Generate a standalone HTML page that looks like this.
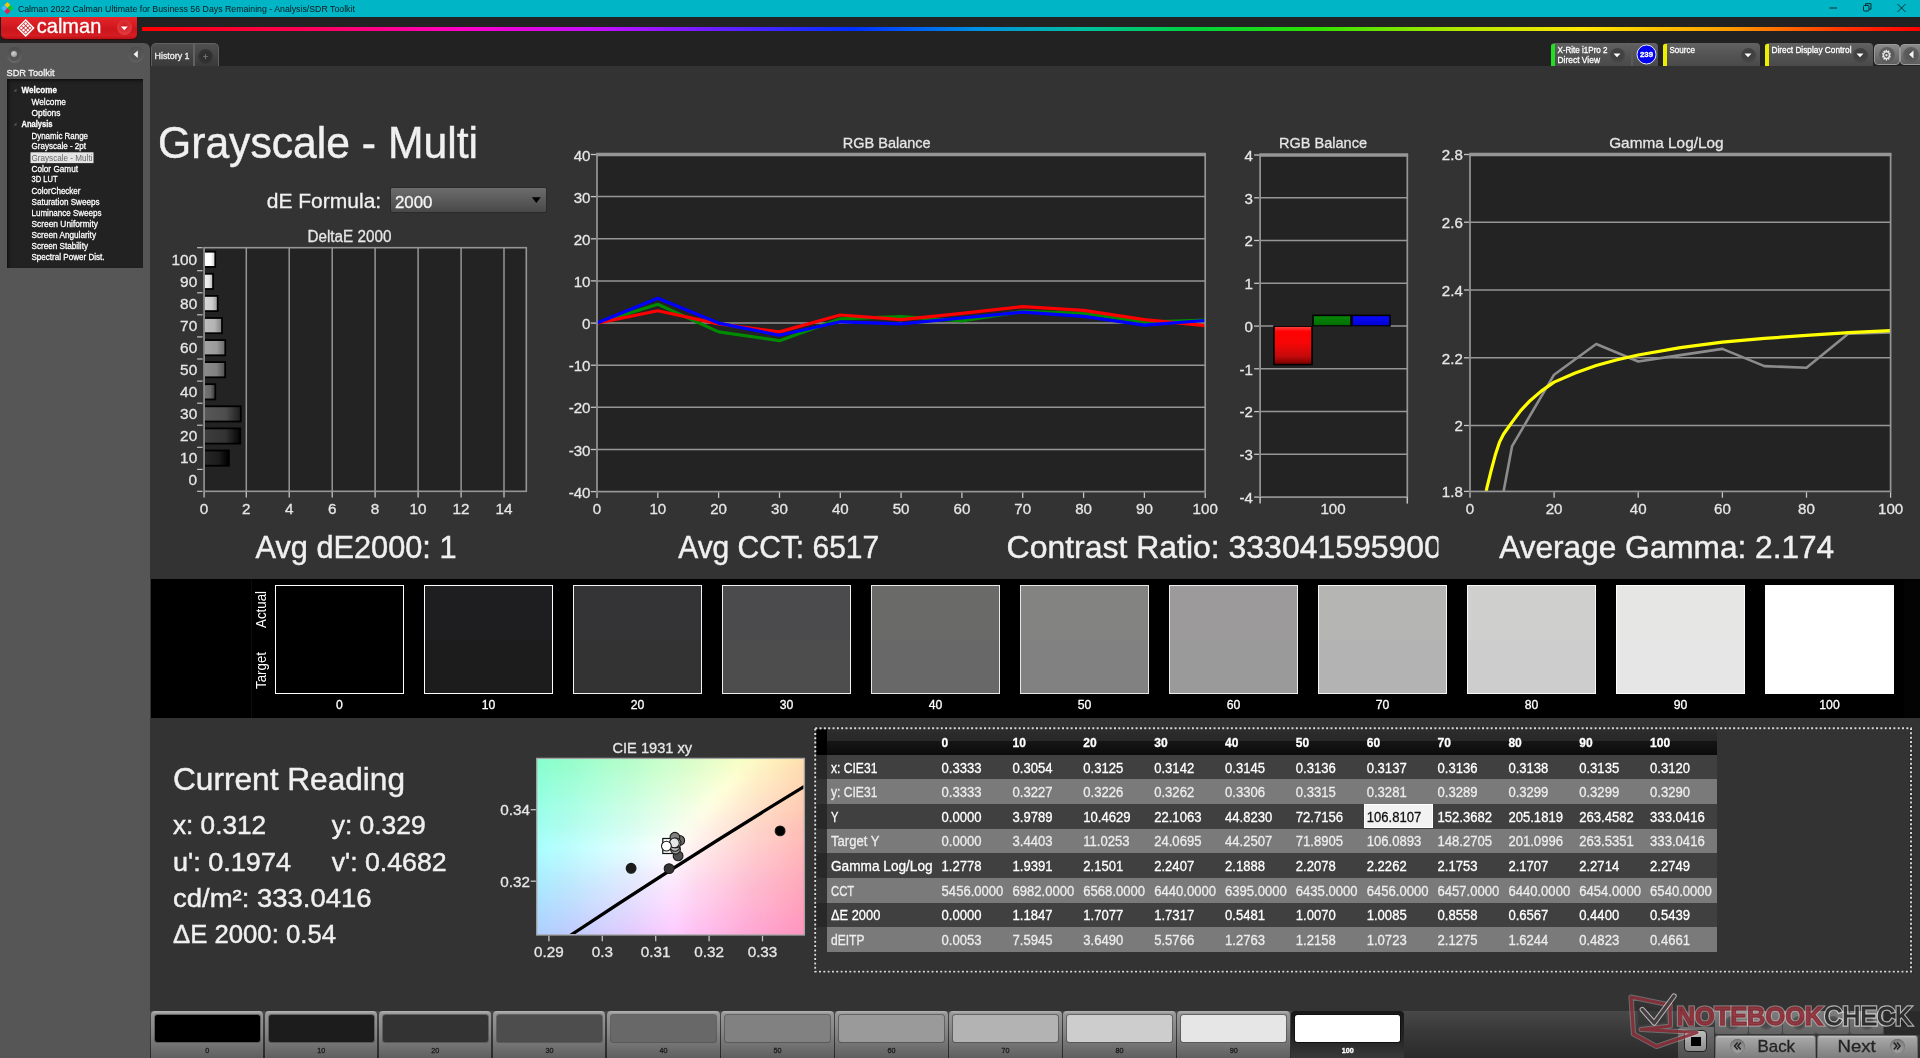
<!DOCTYPE html>
<html lang="en"><head><meta charset="utf-8"><title>Calman 2022 - Analysis/SDR Toolkit</title>
<style>
html,body{margin:0;padding:0;}
body{width:1920px;height:1058px;overflow:hidden;background:#333333;position:relative;font-family:"Liberation Sans",sans-serif;}
div{position:absolute;box-sizing:border-box;}
svg{position:absolute;left:0;top:0;font-family:"Liberation Sans",sans-serif;will-change:transform;}

</style></head><body>
<div style="left:0;top:0;width:1920px;height:17px;background:#00b5c5;"></div>
<div style="left:0;top:17px;width:1920px;height:50px;background:#222222;"></div>
<div style="left:1px;top:17px;width:136px;height:22px;border-radius:0 0 5px 5px;background:linear-gradient(#e6262b,#cc161c 55%,#d41c22 85%,#b81016);box-shadow:0 1px 1px #400608;"></div>
<div style="left:117px;top:20px;width:15px;height:15px;border-radius:8px;background:radial-gradient(circle at 50% 40%,#d01a20,#e84a4e);"></div>
<div style="left:142px;top:26.700px;width:1778px;height:3.900px;background:linear-gradient(90deg,#ff0000 0%,#ff0060 10%,#ff00c8 18%,#c010ff 26%,#6020ff 33%,#0030ff 40%,#0090e0 47%,#00c0a0 53%,#00d040 59%,#30e000 66%,#b0e800 74%,#ffe800 81%,#ffa000 89%,#ff3000 96%,#ff0000 100%);"></div>
<div style="left:0;top:43px;width:150px;height:1015px;background:#565656;border-radius:0 6px 0 0;"></div>
<div style="left:6.500px;top:47px;width:15.500px;height:15.500px;border-radius:8px;background:linear-gradient(#484848,#6a6a6a);"></div>
<div style="left:8.500px;top:49px;width:11.500px;height:11.500px;border-radius:6px;background:radial-gradient(circle at 50% 40%,#4e4e4e,#585858);"></div>
<div style="left:11px;top:50.500px;width:6px;height:6px;border-radius:3px;background:radial-gradient(circle at 40% 35%,#d0d0d0,#8a8a8a);"></div>
<div style="left:128px;top:46.500px;width:15.500px;height:15.500px;border-radius:8px;background:linear-gradient(#4a4a4a,#666);"></div>
<div style="left:129.500px;top:48px;width:12.500px;height:12.500px;border-radius:7px;background:radial-gradient(circle at 50% 40%,#505050,#5a5a5a);"></div>
<div style="left:7px;top:79px;width:136px;height:188.500px;background:#222222;box-shadow:inset 2px 2px 3px #111;"></div>
<div style="left:150.500px;top:43px;width:68.500px;height:23.500px;border-radius:5px 5px 0 0;background:linear-gradient(#505050,#383838);border:1px solid #606060;border-bottom:none;"></div>
<div style="left:193px;top:44px;width:1.500px;height:22px;background:#626262;"></div>
<div style="left:198px;top:49px;width:14.500px;height:14.500px;border-radius:8px;background:radial-gradient(circle,#2e2e2e 40%,#3e3e3e 100%);"></div>
<div style="left:150px;top:66px;width:1770px;height:992px;background:#333333;"></div>
<div style="left:1551px;top:43.200px;width:107px;height:23px;border-radius:4px 4px 0 0;background:linear-gradient(#626262,#555 45%,#4a4a4a);"></div>
<div style="left:1551px;top:44.200px;width:3.800px;height:22px;border-radius:2px 0 0 0;background:#22dd22;"></div>
<div style="left:1609.5px;top:48px;width:15px;height:15px;border-radius:8px;background:radial-gradient(circle at 50% 40%,#3a3a3a,#4c4c4c);"></div>
<div style="left:1631px;top:45px;width:1.500px;height:21px;background:#5a5a5a;"></div>
<div style="left:1663px;top:43.200px;width:97px;height:23px;border-radius:4px 4px 0 0;background:linear-gradient(#626262,#555 45%,#4a4a4a);"></div>
<div style="left:1663px;top:44.200px;width:3.800px;height:22px;border-radius:2px 0 0 0;background:#eeee00;"></div>
<div style="left:1740.5px;top:48px;width:15px;height:15px;border-radius:8px;background:radial-gradient(circle at 50% 40%,#3a3a3a,#4c4c4c);"></div>
<div style="left:1765px;top:43.200px;width:108px;height:23px;border-radius:4px 4px 0 0;background:linear-gradient(#626262,#555 45%,#4a4a4a);"></div>
<div style="left:1765px;top:44.200px;width:3.800px;height:22px;border-radius:2px 0 0 0;background:#eeee00;"></div>
<div style="left:1852.5px;top:48px;width:15px;height:15px;border-radius:8px;background:radial-gradient(circle at 50% 40%,#3a3a3a,#4c4c4c);"></div>
<div style="left:1874px;top:43.500px;width:25.500px;height:21.500px;border-radius:4px;background:linear-gradient(#8a8a8a,#5e5e5e);border:1px solid #9a9a9a;"></div>
<div style="left:1900px;top:43.500px;width:24px;height:21.500px;border-radius:4px;background:linear-gradient(#8a8a8a,#5e5e5e);border:1px solid #9a9a9a;"></div>
<div style="left:1878.500px;top:46.500px;width:16px;height:16px;border-radius:8px;background:radial-gradient(circle,#505050,#666);"></div>
<div style="left:1903px;top:46.500px;width:16px;height:16px;border-radius:8px;background:radial-gradient(circle,#505050,#666);"></div>
<div style="left:389.500px;top:186.500px;width:157.300px;height:26.700px;background:linear-gradient(#6c6c6c,#484848);border:1px solid #2a2a2a;border-radius:2px;"></div>
<div style="left:150.500px;top:578.800px;width:1769.500px;height:139px;background:#000;"></div>
<div style="left:251px;top:578.800px;width:1px;height:139px;background:#0c0c0c;"></div>
<div style="left:1904px;top:578.800px;width:16px;height:139px;background:#030303;"></div>
<div style="left:275.3px;top:585.300px;width:128.400px;height:109px;border:1.600px solid #ffffff;background:linear-gradient(#000000 0,#000000 50%,#000000 50%,#000000 100%);"></div>
<div style="left:424.3px;top:585.300px;width:128.400px;height:109px;border:1.600px solid #ffffff;background:linear-gradient(#1e1e20 0,#1e1e20 50%,#1c1c1c 50%,#1c1c1c 100%);"></div>
<div style="left:573.3px;top:585.300px;width:128.400px;height:109px;border:1.600px solid #f4f4f4;background:linear-gradient(#343335 0,#343335 50%,#333333 50%,#333333 100%);"></div>
<div style="left:722.3px;top:585.300px;width:128.400px;height:109px;border:1.600px solid #f0f0f0;background:linear-gradient(#4b4a4c 0,#4b4a4c 50%,#4d4d4d 50%,#4d4d4d 100%);"></div>
<div style="left:871.3px;top:585.300px;width:128.400px;height:109px;border:1.600px solid #e8e8e8;background:linear-gradient(#6a6a69 0,#6a6a69 50%,#686868 50%,#686868 100%);"></div>
<div style="left:1020.3px;top:585.300px;width:128.400px;height:109px;border:1.600px solid #e8e8e8;background:linear-gradient(#838381 0,#838381 50%,#818181 50%,#818181 100%);"></div>
<div style="left:1169.3px;top:585.300px;width:128.400px;height:109px;border:1.600px solid #eeeeee;background:linear-gradient(#9c9a9a 0,#9c9a9a 50%,#9a9a9a 50%,#9a9a9a 100%);"></div>
<div style="left:1318.3px;top:585.300px;width:128.400px;height:109px;border:1.600px solid #f4f4f4;background:linear-gradient(#b5b5b4 0,#b5b5b4 50%,#b3b3b3 50%,#b3b3b3 100%);"></div>
<div style="left:1467.3px;top:585.300px;width:128.400px;height:109px;border:1.600px solid #f8f8f8;background:linear-gradient(#cfcfcd 0,#cfcfcd 50%,#cdcdcd 50%,#cdcdcd 100%);"></div>
<div style="left:1616.3px;top:585.300px;width:128.400px;height:109px;border:1.600px solid #ffffff;background:linear-gradient(#e6e6e4 0,#e6e6e4 50%,#e6e6e6 50%,#e6e6e6 100%);"></div>
<div style="left:1765.3px;top:585.300px;width:128.400px;height:109px;border:1.600px solid #ffffff;background:linear-gradient(#ffffff 0,#ffffff 50%,#ffffff 50%,#ffffff 100%);"></div>
<div style="left:816.2px;top:729.3px;width:901.1px;height:25.5px;background:linear-gradient(#2d2d2d 0,#282828 46%,#151515 48%,#0b0b0b 100%);"></div>
<div style="left:816.2px;top:729.3px;width:10.800px;height:25.5px;background:#000;"></div>
<div style="left:827.0px;top:754.8px;width:890.3px;height:24.9px;background:#404040;"></div>
<div style="left:816.2px;top:754.8px;width:10.800px;height:24.9px;background:#282828;"></div>
<div style="left:827.0px;top:779.4px;width:890.3px;height:24.9px;background:#7a7a7a;"></div>
<div style="left:816.2px;top:779.4px;width:10.800px;height:24.9px;background:#333333;"></div>
<div style="left:827.0px;top:804.1px;width:890.3px;height:24.9px;background:#404040;"></div>
<div style="left:816.2px;top:804.1px;width:10.800px;height:24.9px;background:#282828;"></div>
<div style="left:1363.500px;top:804.3px;width:69px;height:23.4px;background:#f2f2f2;border:1px solid #fff;"></div>
<div style="left:827.0px;top:828.7px;width:890.3px;height:24.9px;background:#7a7a7a;"></div>
<div style="left:816.2px;top:828.7px;width:10.800px;height:24.9px;background:#333333;"></div>
<div style="left:827.0px;top:853.3px;width:890.3px;height:24.9px;background:#404040;"></div>
<div style="left:816.2px;top:853.3px;width:10.800px;height:24.9px;background:#282828;"></div>
<div style="left:827.0px;top:878.0px;width:890.3px;height:24.9px;background:#7a7a7a;"></div>
<div style="left:816.2px;top:878.0px;width:10.800px;height:24.9px;background:#333333;"></div>
<div style="left:827.0px;top:902.6px;width:890.3px;height:24.9px;background:#404040;"></div>
<div style="left:816.2px;top:902.6px;width:10.800px;height:24.9px;background:#282828;"></div>
<div style="left:827.0px;top:927.3px;width:890.3px;height:24.9px;background:#7a7a7a;"></div>
<div style="left:816.2px;top:927.3px;width:10.800px;height:24.9px;background:#333333;"></div>
<div style="left:150px;top:1011px;width:1770px;height:47px;background:linear-gradient(#484848 0,#3a3a3a 40%,#2a2a2a 100%);"></div>
<div style="left:150.8px;top:1011.300px;width:112.600px;height:48px;border-radius:4px 4px 0 0;background:linear-gradient(#b4b4b4 0,#969696 6%,#828282 50%,#5e5e5e 100%);"></div>
<div style="left:154.7px;top:1014.700px;width:105px;height:27.500px;border-radius:2.500px;background:#000000;box-shadow:0 0 0 1px rgba(70,70,70,0.600);"></div>
<div style="left:264.9px;top:1011.300px;width:112.600px;height:48px;border-radius:4px 4px 0 0;background:linear-gradient(#b4b4b4 0,#969696 6%,#828282 50%,#5e5e5e 100%);"></div>
<div style="left:268.8px;top:1014.700px;width:105px;height:27.500px;border-radius:2.500px;background:#1c1c1c;box-shadow:0 0 0 1px rgba(70,70,70,0.600);"></div>
<div style="left:378.9px;top:1011.300px;width:112.600px;height:48px;border-radius:4px 4px 0 0;background:linear-gradient(#b4b4b4 0,#969696 6%,#828282 50%,#5e5e5e 100%);"></div>
<div style="left:382.8px;top:1014.700px;width:105px;height:27.500px;border-radius:2.500px;background:#333333;box-shadow:0 0 0 1px rgba(70,70,70,0.600);"></div>
<div style="left:492.9px;top:1011.300px;width:112.600px;height:48px;border-radius:4px 4px 0 0;background:linear-gradient(#b4b4b4 0,#969696 6%,#828282 50%,#5e5e5e 100%);"></div>
<div style="left:496.8px;top:1014.700px;width:105px;height:27.500px;border-radius:2.500px;background:#4d4d4d;box-shadow:0 0 0 1px rgba(70,70,70,0.600);"></div>
<div style="left:607.0px;top:1011.300px;width:112.600px;height:48px;border-radius:4px 4px 0 0;background:linear-gradient(#b4b4b4 0,#969696 6%,#828282 50%,#5e5e5e 100%);"></div>
<div style="left:610.9px;top:1014.700px;width:105px;height:27.500px;border-radius:2.500px;background:#686868;box-shadow:0 0 0 1px rgba(70,70,70,0.600);"></div>
<div style="left:721.0px;top:1011.300px;width:112.600px;height:48px;border-radius:4px 4px 0 0;background:linear-gradient(#b4b4b4 0,#969696 6%,#828282 50%,#5e5e5e 100%);"></div>
<div style="left:724.9px;top:1014.700px;width:105px;height:27.500px;border-radius:2.500px;background:#818181;box-shadow:0 0 0 1px rgba(70,70,70,0.600);"></div>
<div style="left:835.1px;top:1011.300px;width:112.600px;height:48px;border-radius:4px 4px 0 0;background:linear-gradient(#b4b4b4 0,#969696 6%,#828282 50%,#5e5e5e 100%);"></div>
<div style="left:839.0px;top:1014.700px;width:105px;height:27.500px;border-radius:2.500px;background:#9a9a9a;box-shadow:0 0 0 1px rgba(70,70,70,0.600);"></div>
<div style="left:949.2px;top:1011.300px;width:112.600px;height:48px;border-radius:4px 4px 0 0;background:linear-gradient(#b4b4b4 0,#969696 6%,#828282 50%,#5e5e5e 100%);"></div>
<div style="left:953.1px;top:1014.700px;width:105px;height:27.500px;border-radius:2.500px;background:#b3b3b3;box-shadow:0 0 0 1px rgba(70,70,70,0.600);"></div>
<div style="left:1063.2px;top:1011.300px;width:112.600px;height:48px;border-radius:4px 4px 0 0;background:linear-gradient(#b4b4b4 0,#969696 6%,#828282 50%,#5e5e5e 100%);"></div>
<div style="left:1067.1px;top:1014.700px;width:105px;height:27.500px;border-radius:2.500px;background:#cdcdcd;box-shadow:0 0 0 1px rgba(70,70,70,0.600);"></div>
<div style="left:1177.2px;top:1011.300px;width:112.600px;height:48px;border-radius:4px 4px 0 0;background:linear-gradient(#b4b4b4 0,#969696 6%,#828282 50%,#5e5e5e 100%);"></div>
<div style="left:1181.2px;top:1014.700px;width:105px;height:27.500px;border-radius:2.500px;background:#e6e6e6;box-shadow:0 0 0 1px rgba(70,70,70,0.600);"></div>
<div style="left:1291.3px;top:1011.300px;width:112.500px;height:48px;border-radius:4px 4px 0 0;background:linear-gradient(#181818 0,#222 50%,#3a3a3a 100%);"></div>
<div style="left:1295.2px;top:1014.700px;width:105px;height:27.500px;border-radius:2.500px;background:#ffffff;box-shadow:0 0 0 1px #111;"></div>
<div style="left:1715px;top:1011px;width:169px;height:23px;background:#4a4a4a;"></div>
<div style="left:1715.3px;top:1011px;width:33px;height:22.800px;background:linear-gradient(#7e7e7e,#626262);border-radius:0 0 3px 3px;"></div>
<div style="left:1724.8px;top:1015.500px;width:14px;height:14px;border-radius:7px;background:radial-gradient(circle,#484848 30%,#686868 100%);"></div>
<div style="left:1749.0px;top:1011px;width:33px;height:22.800px;background:linear-gradient(#7e7e7e,#626262);border-radius:0 0 3px 3px;"></div>
<div style="left:1758.5px;top:1015.500px;width:14px;height:14px;border-radius:7px;background:radial-gradient(circle,#484848 30%,#686868 100%);"></div>
<div style="left:1782.7px;top:1011px;width:33px;height:22.800px;background:linear-gradient(#7e7e7e,#626262);border-radius:0 0 3px 3px;"></div>
<div style="left:1792.2px;top:1015.500px;width:14px;height:14px;border-radius:7px;background:radial-gradient(circle,#484848 30%,#686868 100%);"></div>
<div style="left:1816.4px;top:1011px;width:33px;height:22.800px;background:linear-gradient(#7e7e7e,#626262);border-radius:0 0 3px 3px;"></div>
<div style="left:1825.9px;top:1015.500px;width:14px;height:14px;border-radius:7px;background:radial-gradient(circle,#484848 30%,#686868 100%);"></div>
<div style="left:1850.1px;top:1011px;width:33px;height:22.800px;background:linear-gradient(#7e7e7e,#626262);border-radius:0 0 3px 3px;"></div>
<div style="left:1859.6px;top:1015.500px;width:14px;height:14px;border-radius:7px;background:radial-gradient(circle,#484848 30%,#686868 100%);"></div>
<div style="left:1884px;top:1011px;width:36px;height:23.500px;background:#2a2a2a;"></div>
<div style="left:1896px;top:1016px;width:14px;height:14px;border-radius:7px;background:radial-gradient(circle,#222,#343434);"></div>
<div style="left:1678px;top:1026.700px;width:35.500px;height:32px;border-radius:4px 0 0 0;background:linear-gradient(#707070,#4e4e4e);"></div>
<div style="left:1684.200px;top:1030.400px;width:22.500px;height:21.800px;border-radius:4px;background:linear-gradient(#bcbcbc,#8c8c8c);border:1.800px solid #222;"></div>
<div style="left:1690.800px;top:1036.700px;width:10px;height:9.200px;background:#000;"></div>
<div style="left:1714.8px;top:1035px;width:101.300px;height:23.500px;border-radius:3px 3px 0 0;background:linear-gradient(#c4c4c4 0,#a6a6a6 10%,#909090 55%,#7c7c7c 100%);border:1px solid #6a6a6a;border-bottom:none;"></div>
<div style="left:1817.0px;top:1035px;width:101.300px;height:23.500px;border-radius:3px 3px 0 0;background:linear-gradient(#c4c4c4 0,#a6a6a6 10%,#909090 55%,#7c7c7c 100%);border:1px solid #6a6a6a;border-bottom:none;"></div>
<div style="left:1730px;top:1038.500px;width:15px;height:15px;border-radius:8px;background:linear-gradient(#7c7c7c,#a4a4a4);box-shadow:inset 0 0 2px #555;"></div>
<div style="left:1889.500px;top:1038.500px;width:15px;height:15px;border-radius:8px;background:linear-gradient(#7c7c7c,#a4a4a4);box-shadow:inset 0 0 2px #555;"></div>
<svg width="1920" height="1058" viewBox="0 0 1920 1058">
<defs><linearGradient id="gb0" x1="0" y1="0" x2="1" y2="0"><stop offset="0" stop-color="rgb(255,255,255)"/><stop offset="0.600" stop-color="rgb(255,255,255)"/><stop offset="1" stop-color="rgb(210,210,210)"/></linearGradient><linearGradient id="gb1" x1="0" y1="0" x2="1" y2="0"><stop offset="0" stop-color="rgb(240,240,240)"/><stop offset="0.600" stop-color="rgb(230,230,230)"/><stop offset="1" stop-color="rgb(185,185,185)"/></linearGradient><linearGradient id="gb2" x1="0" y1="0" x2="1" y2="0"><stop offset="0" stop-color="rgb(215,215,215)"/><stop offset="0.600" stop-color="rgb(205,205,205)"/><stop offset="1" stop-color="rgb(160,160,160)"/></linearGradient><linearGradient id="gb3" x1="0" y1="0" x2="1" y2="0"><stop offset="0" stop-color="rgb(189,189,189)"/><stop offset="0.600" stop-color="rgb(179,179,179)"/><stop offset="1" stop-color="rgb(134,134,134)"/></linearGradient><linearGradient id="gb4" x1="0" y1="0" x2="1" y2="0"><stop offset="0" stop-color="rgb(164,164,164)"/><stop offset="0.600" stop-color="rgb(154,154,154)"/><stop offset="1" stop-color="rgb(109,109,109)"/></linearGradient><linearGradient id="gb5" x1="0" y1="0" x2="1" y2="0"><stop offset="0" stop-color="rgb(139,139,139)"/><stop offset="0.600" stop-color="rgb(129,129,129)"/><stop offset="1" stop-color="rgb(84,84,84)"/></linearGradient><linearGradient id="gb6" x1="0" y1="0" x2="1" y2="0"><stop offset="0" stop-color="rgb(114,114,114)"/><stop offset="0.600" stop-color="rgb(104,104,104)"/><stop offset="1" stop-color="rgb(59,59,59)"/></linearGradient><linearGradient id="gb7" x1="0" y1="0" x2="1" y2="0"><stop offset="0" stop-color="rgb(87,87,87)"/><stop offset="0.600" stop-color="rgb(77,77,77)"/><stop offset="1" stop-color="rgb(32,32,32)"/></linearGradient><linearGradient id="gb8" x1="0" y1="0" x2="1" y2="0"><stop offset="0" stop-color="rgb(61,61,61)"/><stop offset="0.600" stop-color="rgb(51,51,51)"/><stop offset="1" stop-color="rgb(6,6,6)"/></linearGradient><linearGradient id="gb9" x1="0" y1="0" x2="1" y2="0"><stop offset="0" stop-color="rgb(38,38,38)"/><stop offset="0.600" stop-color="rgb(28,28,28)"/><stop offset="1" stop-color="rgb(0,0,0)"/></linearGradient><clipPath id="cprgb"><rect x="597.0" y="154.5" width="609.7" height="337.1"/></clipPath><linearGradient id="gr" x1="0" y1="0" x2="0" y2="1"><stop offset="0" stop-color="#ff4a4a"/><stop offset="0.140" stop-color="#ff0202"/><stop offset="0.450" stop-color="#f60606"/><stop offset="0.780" stop-color="#c40a0a"/><stop offset="1" stop-color="#740000"/></linearGradient><linearGradient id="gg" x1="0" y1="0" x2="0" y2="1"><stop offset="0" stop-color="#088808"/><stop offset="1" stop-color="#006c00"/></linearGradient><linearGradient id="gbl" x1="0" y1="0" x2="0" y2="1"><stop offset="0" stop-color="#0a0aff"/><stop offset="1" stop-color="#0000d0"/></linearGradient><clipPath id="cpcr"><rect x="990" y="525" width="448.500" height="50"/></clipPath><clipPath id="cpg"><rect x="1470.0" y="154.5" width="422.1" height="336.9"/></clipPath><clipPath id="cpbg"><rect x="536.7" y="758.4" width="267.7" height="176.6"/></clipPath><filter id="fbl" x="-5%" y="-5%" width="110%" height="110%"><feGaussianBlur stdDeviation="5"/></filter><clipPath id="cpc"><rect x="537.7" y="759.4" width="265.7" height="174.6"/></clipPath></defs>
<g transform="translate(7.400,8.100)"><path d="M0 -6.100l3.050 3.050l-3.050 3.050l-3.050 -3.050z" fill="#f4c414"/><path d="M-3.050 -3.050l3.050 3.050l-3.050 3.050l-3.050 -3.050z" fill="#48b8f8"/><path d="M3.050 -3.050l3.050 3.050l-3.050 3.050l-3.050 -3.050z" fill="#10c828"/><path d="M0 0l3.050 3.050l-3.050 3.050l-3.050 -3.050z" fill="#e82058"/></g>
<text x="17.9" y="11.9" font-size="9.74" fill="#0a1a1c" text-anchor="start" textLength="337.0" lengthAdjust="spacingAndGlyphs" stroke="none">Calman 2022 Calman Ultimate for Business 56 Days Remaining  - Analysis/SDR Toolkit</text>
<line x1="1829.5" y1="8.0" x2="1837.0" y2="8.0" stroke="#10282b" stroke-width="1"/>
<rect x="1863.500" y="5.500" width="5.500" height="5.500" rx="1" fill="none" stroke="#10282b" stroke-width="1"/><path d="M1865.500 5.500v-1.800h5.500v5.500h-1.800" fill="none" stroke="#10282b" stroke-width="1"/>
<path d="M1897.500 4l8 8m0 -8l-8 8" stroke="#10282b" stroke-width="1" fill="none"/>
<path d="M120.800 26.500h7l-3.500 3.800z" fill="#fff"/>
<g transform="translate(25.700,27.900) rotate(45)"><rect x="-5.600" y="-5.600" width="11.200" height="11.200" fill="none" stroke="#fff" stroke-width="1.500"/><g fill="#fff"><rect x="-4.20" y="-4.20" width="2.300" height="2.300"/><rect x="-4.20" y="-1.15" width="2.300" height="2.300"/><rect x="-4.20" y="1.90" width="2.300" height="2.300"/><rect x="-1.15" y="-4.20" width="2.300" height="2.300"/><rect x="-1.15" y="-1.15" width="2.300" height="2.300"/><rect x="-1.15" y="1.90" width="2.300" height="2.300"/><rect x="1.90" y="-4.20" width="2.300" height="2.300"/><rect x="1.90" y="-1.15" width="2.300" height="2.300"/><rect x="1.90" y="1.90" width="2.300" height="2.300"/></g></g>
<text x="36.8" y="33.1" font-size="19.48" fill="#ffffff" text-anchor="start" textLength="64.5" lengthAdjust="spacingAndGlyphs" stroke="#ffffff" stroke-width="0.3">calman</text>
<path d="M137.800 50.500v7.500l-4.300 -3.750z" fill="#f4f4f4"/>
<text x="6.5" y="75.5" font-size="9.74" fill="#f2f2f2" text-anchor="start" textLength="48.0" lengthAdjust="spacingAndGlyphs" stroke="#f2f2f2" stroke-width="0.3">SDR Toolkit</text>
<rect x="30.5" y="152.3" width="63.0" height="10.8" fill="#e4e4e4"/>
<text x="21.5" y="93.0" font-size="9.59" fill="#ffffff" text-anchor="start" textLength="35.5" lengthAdjust="spacingAndGlyphs" font-weight="bold" stroke="#ffffff" stroke-width="0.3">Welcome</text>
<text x="31.5" y="105.0" font-size="9.59" fill="#ffffff" text-anchor="start" textLength="34.5" lengthAdjust="spacingAndGlyphs" stroke="#ffffff" stroke-width="0.3">Welcome</text>
<text x="31.5" y="116.0" font-size="9.59" fill="#ffffff" text-anchor="start" textLength="29.0" lengthAdjust="spacingAndGlyphs" stroke="#ffffff" stroke-width="0.3">Options</text>
<text x="21.5" y="127.0" font-size="9.59" fill="#ffffff" text-anchor="start" textLength="31.0" lengthAdjust="spacingAndGlyphs" font-weight="bold" stroke="#ffffff" stroke-width="0.3">Analysis</text>
<text x="31.5" y="138.5" font-size="9.59" fill="#ffffff" text-anchor="start" textLength="56.5" lengthAdjust="spacingAndGlyphs" stroke="#ffffff" stroke-width="0.3">Dynamic Range</text>
<text x="31.5" y="149.3" font-size="9.59" fill="#ffffff" text-anchor="start" textLength="54.5" lengthAdjust="spacingAndGlyphs" stroke="#ffffff" stroke-width="0.3">Grayscale - 2pt</text>
<text x="31.5" y="160.5" font-size="9.59" fill="#666666" text-anchor="start" textLength="61.0" lengthAdjust="spacingAndGlyphs" stroke="none">Grayscale - Multi</text>
<text x="31.5" y="171.7" font-size="9.59" fill="#ffffff" text-anchor="start" textLength="46.5" lengthAdjust="spacingAndGlyphs" stroke="#ffffff" stroke-width="0.3">Color Gamut</text>
<text x="31.5" y="182.3" font-size="9.59" fill="#ffffff" text-anchor="start" textLength="26.0" lengthAdjust="spacingAndGlyphs" stroke="#ffffff" stroke-width="0.3">3D LUT</text>
<text x="31.5" y="193.5" font-size="9.59" fill="#ffffff" text-anchor="start" textLength="49.0" lengthAdjust="spacingAndGlyphs" stroke="#ffffff" stroke-width="0.3">ColorChecker</text>
<text x="31.5" y="204.7" font-size="9.59" fill="#ffffff" text-anchor="start" textLength="68.0" lengthAdjust="spacingAndGlyphs" stroke="#ffffff" stroke-width="0.3">Saturation Sweeps</text>
<text x="31.5" y="215.5" font-size="9.59" fill="#ffffff" text-anchor="start" textLength="70.0" lengthAdjust="spacingAndGlyphs" stroke="#ffffff" stroke-width="0.3">Luminance Sweeps</text>
<text x="31.5" y="226.7" font-size="9.59" fill="#ffffff" text-anchor="start" textLength="66.5" lengthAdjust="spacingAndGlyphs" stroke="#ffffff" stroke-width="0.3">Screen Uniformity</text>
<text x="31.5" y="238.0" font-size="9.59" fill="#ffffff" text-anchor="start" textLength="64.5" lengthAdjust="spacingAndGlyphs" stroke="#ffffff" stroke-width="0.3">Screen Angularity</text>
<text x="31.5" y="248.5" font-size="9.59" fill="#ffffff" text-anchor="start" textLength="56.5" lengthAdjust="spacingAndGlyphs" stroke="#ffffff" stroke-width="0.3">Screen Stability</text>
<text x="31.5" y="259.8" font-size="9.59" fill="#ffffff" text-anchor="start" textLength="73.0" lengthAdjust="spacingAndGlyphs" stroke="#ffffff" stroke-width="0.3">Spectral Power Dist.</text>
<path d="M16.500 88.500v3h-3z M16.500 122.500v3h-3z" fill="#5a5a5a"/>
<text x="205.3" y="59.6" font-size="8.14" fill="#808080" text-anchor="middle" textLength="4.8" lengthAdjust="spacingAndGlyphs" stroke="#808080" stroke-width="0.3">+</text>
<text x="154.5" y="58.8" font-size="9.16" fill="#f0f0f0" text-anchor="start" textLength="35.0" lengthAdjust="spacingAndGlyphs" stroke="#f0f0f0" stroke-width="0.3">History 1</text>
<path d="M1613.5 53.5h7l-3.500 3.800z" fill="#fff"/>
<text x="1557.5" y="52.5" font-size="9.30" fill="#ffffff" text-anchor="start" textLength="50.0" lengthAdjust="spacingAndGlyphs" stroke="#ffffff" stroke-width="0.3">X-Rite i1Pro 2</text>
<text x="1557.5" y="63.0" font-size="9.30" fill="#ffffff" text-anchor="start" textLength="42.5" lengthAdjust="spacingAndGlyphs" stroke="#ffffff" stroke-width="0.3">Direct View</text>
<circle cx="1646.500" cy="54.500" r="9.500" fill="#0000f4" stroke="#e8e8ff" stroke-width="1"/>
<text x="1646.5" y="57.3" font-size="7.56" fill="#ffffff" text-anchor="middle" textLength="13.0" lengthAdjust="spacingAndGlyphs" font-weight="bold" stroke="#ffffff" stroke-width="0.3">239</text>
<path d="M1744.5 53.5h7l-3.500 3.800z" fill="#fff"/>
<text x="1669.5" y="52.5" font-size="9.30" fill="#ffffff" text-anchor="start" textLength="25.5" lengthAdjust="spacingAndGlyphs" stroke="#ffffff" stroke-width="0.3">Source</text>
<path d="M1856.5 53.5h7l-3.500 3.800z" fill="#fff"/>
<text x="1771.5" y="52.5" font-size="9.30" fill="#ffffff" text-anchor="start" textLength="80.0" lengthAdjust="spacingAndGlyphs" stroke="#ffffff" stroke-width="0.3">Direct Display Control</text>
<text x="1886.5" y="59.5" font-size="13.81" fill="#e8e8e8" text-anchor="middle" textLength="10.4" lengthAdjust="spacingAndGlyphs" font-family="DejaVu Sans, sans-serif" stroke="#e8e8e8" stroke-width="0.3">⚙</text>
<path d="M1913.500 50.500v8l-4.500 -4z" fill="#f4f4f4"/>
<text x="158.0" y="157.5" font-size="45.06" fill="#f0f0f0" text-anchor="start" textLength="320.0" lengthAdjust="spacingAndGlyphs" stroke="#f0f0f0" stroke-width="0.44999999999999996">Grayscale - Multi</text>
<text x="266.7" y="207.8" font-size="20.35" fill="#f0f0f0" text-anchor="start" textLength="114.5" lengthAdjust="spacingAndGlyphs" stroke="#f0f0f0" stroke-width="0.3">dE Formula:</text>
<text x="395.0" y="208.3" font-size="16.72" fill="#f4f4f4" text-anchor="start" textLength="37.5" lengthAdjust="spacingAndGlyphs" stroke="#f4f4f4" stroke-width="0.3">2000</text>
<path d="M531.800 197.200h9l-4.500 5.800z" fill="#000"/>
<text x="349.4" y="242.3" font-size="15.84" fill="#e6e6e6" text-anchor="middle" textLength="84.0" lengthAdjust="spacingAndGlyphs" stroke="#e6e6e6" stroke-width="0.3">DeltaE 2000</text>
<rect x="204.1" y="247.7" width="322.2" height="243.6" fill="#232323"/>
<line x1="246.3" y1="247.7" x2="246.3" y2="491.3" stroke="#969696" stroke-width="1.5"/>
<line x1="289.2" y1="247.7" x2="289.2" y2="491.3" stroke="#969696" stroke-width="1.5"/>
<line x1="332.2" y1="247.7" x2="332.2" y2="491.3" stroke="#969696" stroke-width="1.5"/>
<line x1="375.1" y1="247.7" x2="375.1" y2="491.3" stroke="#969696" stroke-width="1.5"/>
<line x1="418.1" y1="247.7" x2="418.1" y2="491.3" stroke="#969696" stroke-width="1.5"/>
<line x1="461.1" y1="247.7" x2="461.1" y2="491.3" stroke="#969696" stroke-width="1.5"/>
<line x1="504.0" y1="247.7" x2="504.0" y2="491.3" stroke="#969696" stroke-width="1.5"/>
<text x="197.2" y="264.5" font-size="15.41" fill="#e6e6e6" text-anchor="end" textLength="25.7" lengthAdjust="spacingAndGlyphs" stroke="#e6e6e6" stroke-width="0.3">100</text>
<line x1="197.1" y1="247.7" x2="202.6" y2="247.7" stroke="#c4c4c4" stroke-width="1.2"/>
<rect x="204.1" y="250.8" width="12.0" height="17" fill="#000"/>
<rect x="204.9" y="252.6" width="9.5" height="13.400" fill="url(#gb0)"/>
<text x="197.2" y="286.6" font-size="15.41" fill="#e6e6e6" text-anchor="end" textLength="17.1" lengthAdjust="spacingAndGlyphs" stroke="#e6e6e6" stroke-width="0.3">90</text>
<line x1="197.1" y1="270.7" x2="202.6" y2="270.7" stroke="#c4c4c4" stroke-width="1.2"/>
<rect x="204.1" y="272.9" width="9.8" height="17" fill="#000"/>
<rect x="204.9" y="274.7" width="7.3" height="13.400" fill="url(#gb1)"/>
<text x="197.2" y="308.7" font-size="15.41" fill="#e6e6e6" text-anchor="end" textLength="17.1" lengthAdjust="spacingAndGlyphs" stroke="#e6e6e6" stroke-width="0.3">80</text>
<line x1="197.1" y1="292.8" x2="202.6" y2="292.8" stroke="#c4c4c4" stroke-width="1.2"/>
<rect x="204.1" y="295.0" width="14.4" height="17" fill="#000"/>
<rect x="204.9" y="296.8" width="11.9" height="13.400" fill="url(#gb2)"/>
<text x="197.2" y="330.8" font-size="15.41" fill="#e6e6e6" text-anchor="end" textLength="17.1" lengthAdjust="spacingAndGlyphs" stroke="#e6e6e6" stroke-width="0.3">70</text>
<line x1="197.1" y1="314.8" x2="202.6" y2="314.8" stroke="#c4c4c4" stroke-width="1.2"/>
<rect x="204.1" y="317.1" width="18.7" height="17" fill="#000"/>
<rect x="204.9" y="318.9" width="16.2" height="13.400" fill="url(#gb3)"/>
<text x="197.2" y="352.9" font-size="15.41" fill="#e6e6e6" text-anchor="end" textLength="17.1" lengthAdjust="spacingAndGlyphs" stroke="#e6e6e6" stroke-width="0.3">60</text>
<line x1="197.1" y1="336.9" x2="202.6" y2="336.9" stroke="#c4c4c4" stroke-width="1.2"/>
<rect x="204.1" y="339.2" width="22.0" height="17" fill="#000"/>
<rect x="204.9" y="341.0" width="19.5" height="13.400" fill="url(#gb4)"/>
<text x="197.2" y="374.9" font-size="15.41" fill="#e6e6e6" text-anchor="end" textLength="17.1" lengthAdjust="spacingAndGlyphs" stroke="#e6e6e6" stroke-width="0.3">50</text>
<line x1="197.1" y1="359.0" x2="202.6" y2="359.0" stroke="#c4c4c4" stroke-width="1.2"/>
<rect x="204.1" y="361.2" width="21.9" height="17" fill="#000"/>
<rect x="204.9" y="363.0" width="19.4" height="13.400" fill="url(#gb5)"/>
<text x="197.2" y="397.0" font-size="15.41" fill="#e6e6e6" text-anchor="end" textLength="17.1" lengthAdjust="spacingAndGlyphs" stroke="#e6e6e6" stroke-width="0.3">40</text>
<line x1="197.1" y1="381.1" x2="202.6" y2="381.1" stroke="#c4c4c4" stroke-width="1.2"/>
<rect x="204.1" y="383.3" width="12.1" height="17" fill="#000"/>
<rect x="204.9" y="385.1" width="9.6" height="13.400" fill="url(#gb6)"/>
<text x="197.2" y="419.1" font-size="15.41" fill="#e6e6e6" text-anchor="end" textLength="17.1" lengthAdjust="spacingAndGlyphs" stroke="#e6e6e6" stroke-width="0.3">30</text>
<line x1="197.1" y1="403.2" x2="202.6" y2="403.2" stroke="#c4c4c4" stroke-width="1.2"/>
<rect x="204.1" y="405.4" width="37.5" height="17" fill="#000"/>
<rect x="204.9" y="407.2" width="35.0" height="13.400" fill="url(#gb7)"/>
<text x="197.2" y="441.2" font-size="15.41" fill="#e6e6e6" text-anchor="end" textLength="17.1" lengthAdjust="spacingAndGlyphs" stroke="#e6e6e6" stroke-width="0.3">20</text>
<line x1="197.1" y1="425.2" x2="202.6" y2="425.2" stroke="#c4c4c4" stroke-width="1.2"/>
<rect x="204.1" y="427.5" width="37.0" height="17" fill="#000"/>
<rect x="204.9" y="429.3" width="34.5" height="13.400" fill="url(#gb8)"/>
<text x="197.2" y="463.3" font-size="15.41" fill="#e6e6e6" text-anchor="end" textLength="17.1" lengthAdjust="spacingAndGlyphs" stroke="#e6e6e6" stroke-width="0.3">10</text>
<line x1="197.1" y1="447.3" x2="202.6" y2="447.3" stroke="#c4c4c4" stroke-width="1.2"/>
<rect x="204.1" y="449.6" width="25.7" height="17" fill="#000"/>
<rect x="204.9" y="451.4" width="23.2" height="13.400" fill="url(#gb9)"/>
<text x="197.2" y="485.3" font-size="15.41" fill="#e6e6e6" text-anchor="end" textLength="8.6" lengthAdjust="spacingAndGlyphs" stroke="#e6e6e6" stroke-width="0.3">0</text>
<line x1="197.1" y1="469.4" x2="202.6" y2="469.4" stroke="#c4c4c4" stroke-width="1.2"/>
<line x1="197.1" y1="491.3" x2="202.6" y2="491.3" stroke="#c4c4c4" stroke-width="1.2"/>
<rect x="204.1" y="247.7" width="322.2" height="243.6" fill="none" stroke="#969696" stroke-width="1.600"/>
<line x1="204.1" y1="492.1" x2="204.1" y2="497.6" stroke="#c4c4c4" stroke-width="1.3"/>
<text x="204.1" y="513.7" font-size="15.26" fill="#e6e6e6" text-anchor="middle" textLength="8.5" lengthAdjust="spacingAndGlyphs" stroke="#e6e6e6" stroke-width="0.3">0</text>
<line x1="246.3" y1="492.1" x2="246.3" y2="497.6" stroke="#c4c4c4" stroke-width="1.3"/>
<text x="246.3" y="513.7" font-size="15.26" fill="#e6e6e6" text-anchor="middle" textLength="8.5" lengthAdjust="spacingAndGlyphs" stroke="#e6e6e6" stroke-width="0.3">2</text>
<line x1="289.2" y1="492.1" x2="289.2" y2="497.6" stroke="#c4c4c4" stroke-width="1.3"/>
<text x="289.2" y="513.7" font-size="15.26" fill="#e6e6e6" text-anchor="middle" textLength="8.5" lengthAdjust="spacingAndGlyphs" stroke="#e6e6e6" stroke-width="0.3">4</text>
<line x1="332.2" y1="492.1" x2="332.2" y2="497.6" stroke="#c4c4c4" stroke-width="1.3"/>
<text x="332.2" y="513.7" font-size="15.26" fill="#e6e6e6" text-anchor="middle" textLength="8.5" lengthAdjust="spacingAndGlyphs" stroke="#e6e6e6" stroke-width="0.3">6</text>
<line x1="375.1" y1="492.1" x2="375.1" y2="497.6" stroke="#c4c4c4" stroke-width="1.3"/>
<text x="375.1" y="513.7" font-size="15.26" fill="#e6e6e6" text-anchor="middle" textLength="8.5" lengthAdjust="spacingAndGlyphs" stroke="#e6e6e6" stroke-width="0.3">8</text>
<line x1="418.1" y1="492.1" x2="418.1" y2="497.6" stroke="#c4c4c4" stroke-width="1.3"/>
<text x="418.1" y="513.7" font-size="15.26" fill="#e6e6e6" text-anchor="middle" textLength="17.0" lengthAdjust="spacingAndGlyphs" stroke="#e6e6e6" stroke-width="0.3">10</text>
<line x1="461.1" y1="492.1" x2="461.1" y2="497.6" stroke="#c4c4c4" stroke-width="1.3"/>
<text x="461.1" y="513.7" font-size="15.26" fill="#e6e6e6" text-anchor="middle" textLength="17.0" lengthAdjust="spacingAndGlyphs" stroke="#e6e6e6" stroke-width="0.3">12</text>
<line x1="504.0" y1="492.1" x2="504.0" y2="497.6" stroke="#c4c4c4" stroke-width="1.3"/>
<text x="504.0" y="513.7" font-size="15.26" fill="#e6e6e6" text-anchor="middle" textLength="17.0" lengthAdjust="spacingAndGlyphs" stroke="#e6e6e6" stroke-width="0.3">14</text>
<text x="255.5" y="557.6" font-size="30.52" fill="#f0f0f0" text-anchor="start" textLength="201.0" lengthAdjust="spacingAndGlyphs" stroke="#f0f0f0" stroke-width="0.44999999999999996">Avg dE2000: 1</text>
<text x="886.7" y="148.3" font-size="15.41" fill="#e6e6e6" text-anchor="middle" textLength="88.0" lengthAdjust="spacingAndGlyphs" stroke="#e6e6e6" stroke-width="0.3">RGB Balance</text>
<rect x="597.0" y="154.5" width="608.2" height="337.1" fill="#232323"/>
<line x1="590.7" y1="154.5" x2="596.2" y2="154.5" stroke="#c4c4c4" stroke-width="1.3"/>
<text x="590.5" y="160.5" font-size="15.12" fill="#e6e6e6" text-anchor="end" textLength="16.8" lengthAdjust="spacingAndGlyphs" stroke="#e6e6e6" stroke-width="0.3">40</text>
<line x1="597.0" y1="196.6" x2="1205.2" y2="196.6" stroke="#969696" stroke-width="1.5"/>
<line x1="590.7" y1="196.6" x2="596.2" y2="196.6" stroke="#c4c4c4" stroke-width="1.3"/>
<text x="590.5" y="202.6" font-size="15.12" fill="#e6e6e6" text-anchor="end" textLength="16.8" lengthAdjust="spacingAndGlyphs" stroke="#e6e6e6" stroke-width="0.3">30</text>
<line x1="597.0" y1="238.8" x2="1205.2" y2="238.8" stroke="#969696" stroke-width="1.5"/>
<line x1="590.7" y1="238.8" x2="596.2" y2="238.8" stroke="#c4c4c4" stroke-width="1.3"/>
<text x="590.5" y="244.8" font-size="15.12" fill="#e6e6e6" text-anchor="end" textLength="16.8" lengthAdjust="spacingAndGlyphs" stroke="#e6e6e6" stroke-width="0.3">20</text>
<line x1="597.0" y1="280.9" x2="1205.2" y2="280.9" stroke="#969696" stroke-width="1.5"/>
<line x1="590.7" y1="280.9" x2="596.2" y2="280.9" stroke="#c4c4c4" stroke-width="1.3"/>
<text x="590.5" y="286.9" font-size="15.12" fill="#e6e6e6" text-anchor="end" textLength="16.8" lengthAdjust="spacingAndGlyphs" stroke="#e6e6e6" stroke-width="0.3">10</text>
<line x1="597.0" y1="323.1" x2="1205.2" y2="323.1" stroke="#969696" stroke-width="1.5"/>
<line x1="590.7" y1="323.1" x2="596.2" y2="323.1" stroke="#c4c4c4" stroke-width="1.3"/>
<text x="590.5" y="329.1" font-size="15.12" fill="#e6e6e6" text-anchor="end" textLength="8.4" lengthAdjust="spacingAndGlyphs" stroke="#e6e6e6" stroke-width="0.3">0</text>
<line x1="597.0" y1="365.2" x2="1205.2" y2="365.2" stroke="#969696" stroke-width="1.5"/>
<line x1="590.7" y1="365.2" x2="596.2" y2="365.2" stroke="#c4c4c4" stroke-width="1.3"/>
<text x="590.5" y="371.2" font-size="15.12" fill="#e6e6e6" text-anchor="end" textLength="21.8" lengthAdjust="spacingAndGlyphs" stroke="#e6e6e6" stroke-width="0.3">-10</text>
<line x1="597.0" y1="407.3" x2="1205.2" y2="407.3" stroke="#969696" stroke-width="1.5"/>
<line x1="590.7" y1="407.3" x2="596.2" y2="407.3" stroke="#c4c4c4" stroke-width="1.3"/>
<text x="590.5" y="413.3" font-size="15.12" fill="#e6e6e6" text-anchor="end" textLength="21.8" lengthAdjust="spacingAndGlyphs" stroke="#e6e6e6" stroke-width="0.3">-20</text>
<line x1="597.0" y1="449.5" x2="1205.2" y2="449.5" stroke="#969696" stroke-width="1.5"/>
<line x1="590.7" y1="449.5" x2="596.2" y2="449.5" stroke="#c4c4c4" stroke-width="1.3"/>
<text x="590.5" y="455.5" font-size="15.12" fill="#e6e6e6" text-anchor="end" textLength="21.8" lengthAdjust="spacingAndGlyphs" stroke="#e6e6e6" stroke-width="0.3">-30</text>
<line x1="590.7" y1="491.6" x2="596.2" y2="491.6" stroke="#c4c4c4" stroke-width="1.3"/>
<text x="590.5" y="497.6" font-size="15.12" fill="#e6e6e6" text-anchor="end" textLength="21.8" lengthAdjust="spacingAndGlyphs" stroke="#e6e6e6" stroke-width="0.3">-40</text>
<polyline points="597.0,323.1 657.8,304.3 718.6,331.9 779.5,340.7 840.3,318.8 901.1,316.7 961.9,320.9 1022.7,311.3 1083.6,313.4 1144.4,322.2 1205.2,320.1" fill="none" stroke="#008a00" stroke-width="3.2" stroke-linejoin="round" clip-path="url(#cprgb)"/>
<polyline points="597.0,323.1 657.8,310.8 718.6,323.9 779.5,331.9 840.3,315.0 901.1,319.7 961.9,313.4 1022.7,306.6 1083.6,310.4 1144.4,319.7 1205.2,325.6" fill="none" stroke="#ff0000" stroke-width="3.2" stroke-linejoin="round" clip-path="url(#cprgb)"/>
<polyline points="597.0,323.1 657.8,298.2 718.6,323.1 779.5,335.3 840.3,321.8 901.1,323.9 961.9,318.0 1022.7,312.1 1083.6,316.3 1144.4,325.2 1205.2,320.5" fill="none" stroke="#0000ff" stroke-width="3.2" stroke-linejoin="round" clip-path="url(#cprgb)"/>
<rect x="597.0" y="154.5" width="608.2" height="337.1" fill="none" stroke="#969696" stroke-width="1.700"/>
<line x1="596.2" y1="154.5" x2="1206.0" y2="154.5" stroke="#969696" stroke-width="3.3"/>
<line x1="597.0" y1="492.4" x2="597.0" y2="497.9" stroke="#c4c4c4" stroke-width="1.3"/>
<text x="597.0" y="513.7" font-size="15.12" fill="#e6e6e6" text-anchor="middle" textLength="8.4" lengthAdjust="spacingAndGlyphs" stroke="#e6e6e6" stroke-width="0.3">0</text>
<line x1="657.8" y1="492.4" x2="657.8" y2="497.9" stroke="#c4c4c4" stroke-width="1.3"/>
<text x="657.8" y="513.7" font-size="15.12" fill="#e6e6e6" text-anchor="middle" textLength="16.8" lengthAdjust="spacingAndGlyphs" stroke="#e6e6e6" stroke-width="0.3">10</text>
<line x1="718.6" y1="492.4" x2="718.6" y2="497.9" stroke="#c4c4c4" stroke-width="1.3"/>
<text x="718.6" y="513.7" font-size="15.12" fill="#e6e6e6" text-anchor="middle" textLength="16.8" lengthAdjust="spacingAndGlyphs" stroke="#e6e6e6" stroke-width="0.3">20</text>
<line x1="779.5" y1="492.4" x2="779.5" y2="497.9" stroke="#c4c4c4" stroke-width="1.3"/>
<text x="779.5" y="513.7" font-size="15.12" fill="#e6e6e6" text-anchor="middle" textLength="16.8" lengthAdjust="spacingAndGlyphs" stroke="#e6e6e6" stroke-width="0.3">30</text>
<line x1="840.3" y1="492.4" x2="840.3" y2="497.9" stroke="#c4c4c4" stroke-width="1.3"/>
<text x="840.3" y="513.7" font-size="15.12" fill="#e6e6e6" text-anchor="middle" textLength="16.8" lengthAdjust="spacingAndGlyphs" stroke="#e6e6e6" stroke-width="0.3">40</text>
<line x1="901.1" y1="492.4" x2="901.1" y2="497.9" stroke="#c4c4c4" stroke-width="1.3"/>
<text x="901.1" y="513.7" font-size="15.12" fill="#e6e6e6" text-anchor="middle" textLength="16.8" lengthAdjust="spacingAndGlyphs" stroke="#e6e6e6" stroke-width="0.3">50</text>
<line x1="961.9" y1="492.4" x2="961.9" y2="497.9" stroke="#c4c4c4" stroke-width="1.3"/>
<text x="961.9" y="513.7" font-size="15.12" fill="#e6e6e6" text-anchor="middle" textLength="16.8" lengthAdjust="spacingAndGlyphs" stroke="#e6e6e6" stroke-width="0.3">60</text>
<line x1="1022.7" y1="492.4" x2="1022.7" y2="497.9" stroke="#c4c4c4" stroke-width="1.3"/>
<text x="1022.7" y="513.7" font-size="15.12" fill="#e6e6e6" text-anchor="middle" textLength="16.8" lengthAdjust="spacingAndGlyphs" stroke="#e6e6e6" stroke-width="0.3">70</text>
<line x1="1083.6" y1="492.4" x2="1083.6" y2="497.9" stroke="#c4c4c4" stroke-width="1.3"/>
<text x="1083.6" y="513.7" font-size="15.12" fill="#e6e6e6" text-anchor="middle" textLength="16.8" lengthAdjust="spacingAndGlyphs" stroke="#e6e6e6" stroke-width="0.3">80</text>
<line x1="1144.4" y1="492.4" x2="1144.4" y2="497.9" stroke="#c4c4c4" stroke-width="1.3"/>
<text x="1144.4" y="513.7" font-size="15.12" fill="#e6e6e6" text-anchor="middle" textLength="16.8" lengthAdjust="spacingAndGlyphs" stroke="#e6e6e6" stroke-width="0.3">90</text>
<line x1="1205.2" y1="492.4" x2="1205.2" y2="497.9" stroke="#c4c4c4" stroke-width="1.3"/>
<text x="1205.2" y="513.7" font-size="15.12" fill="#e6e6e6" text-anchor="middle" textLength="25.2" lengthAdjust="spacingAndGlyphs" stroke="#e6e6e6" stroke-width="0.3">100</text>
<text x="678.2" y="557.5" font-size="30.52" fill="#f0f0f0" text-anchor="start" textLength="201.0" lengthAdjust="spacingAndGlyphs" stroke="#f0f0f0" stroke-width="0.44999999999999996">Avg CCT: 6517</text>
<text x="1323.0" y="148.3" font-size="15.41" fill="#e6e6e6" text-anchor="middle" textLength="88.0" lengthAdjust="spacingAndGlyphs" stroke="#e6e6e6" stroke-width="0.3">RGB Balance</text>
<rect x="1260.1" y="155.0" width="147.2" height="342.1" fill="#232323"/>
<line x1="1254.1" y1="155.0" x2="1259.3" y2="155.0" stroke="#c4c4c4" stroke-width="1.3"/>
<text x="1252.8" y="160.8" font-size="15.12" fill="#e6e6e6" text-anchor="end" textLength="8.4" lengthAdjust="spacingAndGlyphs" stroke="#e6e6e6" stroke-width="0.3">4</text>
<line x1="1260.1" y1="197.8" x2="1407.3" y2="197.8" stroke="#969696" stroke-width="1.5"/>
<line x1="1254.1" y1="197.8" x2="1259.3" y2="197.8" stroke="#c4c4c4" stroke-width="1.3"/>
<text x="1252.8" y="203.6" font-size="15.12" fill="#e6e6e6" text-anchor="end" textLength="8.4" lengthAdjust="spacingAndGlyphs" stroke="#e6e6e6" stroke-width="0.3">3</text>
<line x1="1260.1" y1="240.5" x2="1407.3" y2="240.5" stroke="#969696" stroke-width="1.5"/>
<line x1="1254.1" y1="240.5" x2="1259.3" y2="240.5" stroke="#c4c4c4" stroke-width="1.3"/>
<text x="1252.8" y="246.3" font-size="15.12" fill="#e6e6e6" text-anchor="end" textLength="8.4" lengthAdjust="spacingAndGlyphs" stroke="#e6e6e6" stroke-width="0.3">2</text>
<line x1="1260.1" y1="283.3" x2="1407.3" y2="283.3" stroke="#969696" stroke-width="1.5"/>
<line x1="1254.1" y1="283.3" x2="1259.3" y2="283.3" stroke="#c4c4c4" stroke-width="1.3"/>
<text x="1252.8" y="289.1" font-size="15.12" fill="#e6e6e6" text-anchor="end" textLength="8.4" lengthAdjust="spacingAndGlyphs" stroke="#e6e6e6" stroke-width="0.3">1</text>
<line x1="1260.1" y1="326.1" x2="1407.3" y2="326.1" stroke="#969696" stroke-width="1.5"/>
<line x1="1254.1" y1="326.1" x2="1259.3" y2="326.1" stroke="#c4c4c4" stroke-width="1.3"/>
<text x="1252.8" y="331.9" font-size="15.12" fill="#e6e6e6" text-anchor="end" textLength="8.4" lengthAdjust="spacingAndGlyphs" stroke="#e6e6e6" stroke-width="0.3">0</text>
<line x1="1260.1" y1="368.8" x2="1407.3" y2="368.8" stroke="#969696" stroke-width="1.5"/>
<line x1="1254.1" y1="368.8" x2="1259.3" y2="368.8" stroke="#c4c4c4" stroke-width="1.3"/>
<text x="1252.8" y="374.6" font-size="15.12" fill="#e6e6e6" text-anchor="end" textLength="13.4" lengthAdjust="spacingAndGlyphs" stroke="#e6e6e6" stroke-width="0.3">-1</text>
<line x1="1260.1" y1="411.6" x2="1407.3" y2="411.6" stroke="#969696" stroke-width="1.5"/>
<line x1="1254.1" y1="411.6" x2="1259.3" y2="411.6" stroke="#c4c4c4" stroke-width="1.3"/>
<text x="1252.8" y="417.4" font-size="15.12" fill="#e6e6e6" text-anchor="end" textLength="13.4" lengthAdjust="spacingAndGlyphs" stroke="#e6e6e6" stroke-width="0.3">-2</text>
<line x1="1260.1" y1="454.3" x2="1407.3" y2="454.3" stroke="#969696" stroke-width="1.5"/>
<line x1="1254.1" y1="454.3" x2="1259.3" y2="454.3" stroke="#c4c4c4" stroke-width="1.3"/>
<text x="1252.8" y="460.1" font-size="15.12" fill="#e6e6e6" text-anchor="end" textLength="13.4" lengthAdjust="spacingAndGlyphs" stroke="#e6e6e6" stroke-width="0.3">-3</text>
<line x1="1254.1" y1="497.1" x2="1259.3" y2="497.1" stroke="#c4c4c4" stroke-width="1.3"/>
<text x="1252.8" y="502.9" font-size="15.12" fill="#e6e6e6" text-anchor="end" textLength="13.4" lengthAdjust="spacingAndGlyphs" stroke="#e6e6e6" stroke-width="0.3">-4</text>
<rect x="1274" y="326.1" width="38" height="38.500" fill="url(#gr)" stroke="#000" stroke-width="1.600"/>
<rect x="1313" y="315.4" width="38" height="10.600" fill="url(#gg)" stroke="#000" stroke-width="1.600"/>
<rect x="1352" y="315.4" width="38" height="10.600" fill="url(#gbl)" stroke="#000" stroke-width="1.600"/>
<rect x="1260.1" y="155.0" width="147.2" height="342.1" fill="none" stroke="#969696" stroke-width="1.700"/>
<line x1="1259.3" y1="155.0" x2="1408.1" y2="155.0" stroke="#969696" stroke-width="3.3"/>
<line x1="1260.1" y1="497.1" x2="1260.1" y2="503.6" stroke="#c4c4c4" stroke-width="1.5"/>
<line x1="1407.3" y1="497.1" x2="1407.3" y2="503.6" stroke="#c4c4c4" stroke-width="1.5"/>
<text x="1333.0" y="513.7" font-size="15.12" fill="#e6e6e6" text-anchor="middle" textLength="25.2" lengthAdjust="spacingAndGlyphs" stroke="#e6e6e6" stroke-width="0.3">100</text>
<text x="1006.6" y="557.5" font-size="30.52" fill="#f0f0f0" text-anchor="start" textLength="453.0" lengthAdjust="spacingAndGlyphs" clip-path="url(#cpcr)" stroke="#f0f0f0" stroke-width="0.44999999999999996">Contrast Ratio: 3330415959000</text>
<text x="1666.4" y="148.3" font-size="15.41" fill="#e6e6e6" text-anchor="middle" textLength="114.5" lengthAdjust="spacingAndGlyphs" stroke="#e6e6e6" stroke-width="0.3">Gamma Log/Log</text>
<rect x="1470.0" y="154.5" width="420.6" height="336.9" fill="#232323"/>
<line x1="1464.0" y1="154.5" x2="1469.2" y2="154.5" stroke="#c4c4c4" stroke-width="1.3"/>
<text x="1462.8" y="160.4" font-size="15.12" fill="#e6e6e6" text-anchor="end" textLength="21.0" lengthAdjust="spacingAndGlyphs" stroke="#e6e6e6" stroke-width="0.3">2.8</text>
<line x1="1470.0" y1="222.2" x2="1890.6" y2="222.2" stroke="#969696" stroke-width="1.5"/>
<line x1="1464.0" y1="222.2" x2="1469.2" y2="222.2" stroke="#c4c4c4" stroke-width="1.3"/>
<text x="1462.8" y="228.2" font-size="15.12" fill="#e6e6e6" text-anchor="end" textLength="21.0" lengthAdjust="spacingAndGlyphs" stroke="#e6e6e6" stroke-width="0.3">2.6</text>
<line x1="1470.0" y1="290.0" x2="1890.6" y2="290.0" stroke="#969696" stroke-width="1.5"/>
<line x1="1464.0" y1="290.0" x2="1469.2" y2="290.0" stroke="#c4c4c4" stroke-width="1.3"/>
<text x="1462.8" y="295.9" font-size="15.12" fill="#e6e6e6" text-anchor="end" textLength="21.0" lengthAdjust="spacingAndGlyphs" stroke="#e6e6e6" stroke-width="0.3">2.4</text>
<line x1="1470.0" y1="357.8" x2="1890.6" y2="357.8" stroke="#969696" stroke-width="1.5"/>
<line x1="1464.0" y1="357.8" x2="1469.2" y2="357.8" stroke="#c4c4c4" stroke-width="1.3"/>
<text x="1462.8" y="363.6" font-size="15.12" fill="#e6e6e6" text-anchor="end" textLength="21.0" lengthAdjust="spacingAndGlyphs" stroke="#e6e6e6" stroke-width="0.3">2.2</text>
<line x1="1470.0" y1="425.5" x2="1890.6" y2="425.5" stroke="#969696" stroke-width="1.5"/>
<line x1="1464.0" y1="425.5" x2="1469.2" y2="425.5" stroke="#c4c4c4" stroke-width="1.3"/>
<text x="1462.8" y="431.4" font-size="15.12" fill="#e6e6e6" text-anchor="end" textLength="8.4" lengthAdjust="spacingAndGlyphs" stroke="#e6e6e6" stroke-width="0.3">2</text>
<line x1="1464.0" y1="491.4" x2="1469.2" y2="491.4" stroke="#c4c4c4" stroke-width="1.3"/>
<text x="1462.8" y="497.3" font-size="15.12" fill="#e6e6e6" text-anchor="end" textLength="21.0" lengthAdjust="spacingAndGlyphs" stroke="#e6e6e6" stroke-width="0.3">1.8</text>
<polyline points="1470.0,670.1 1512.1,446.1 1554.1,374.7 1596.2,344.0 1638.2,361.5 1680.3,355.1 1722.4,348.9 1764.4,366.1 1806.5,367.7 1848.5,333.6 1890.6,332.4" fill="none" stroke="#8c8c8c" stroke-width="2.600" stroke-linejoin="round" clip-path="url(#cpg)"/>
<polyline points="1482.6,511.9 1486.8,488.2 1491.0,471.2 1495.2,455.3 1499.4,442.4 1503.6,434.0 1512.1,422.1 1520.5,410.9 1528.9,401.8 1541.5,390.9 1554.1,382.1 1575.2,373.0 1596.2,365.5 1617.2,359.8 1638.2,355.0 1680.3,347.6 1722.4,342.2 1764.4,338.4 1806.5,335.4 1848.5,332.7 1890.6,330.6" fill="none" stroke="#ffff00" stroke-width="3.200" stroke-linejoin="round" clip-path="url(#cpg)"/>
<rect x="1470.0" y="154.5" width="420.6" height="336.9" fill="none" stroke="#969696" stroke-width="1.700"/>
<line x1="1469.2" y1="154.5" x2="1891.4" y2="154.5" stroke="#969696" stroke-width="3.3"/>
<line x1="1470.0" y1="492.2" x2="1470.0" y2="497.7" stroke="#c4c4c4" stroke-width="1.3"/>
<text x="1470.0" y="513.7" font-size="15.12" fill="#e6e6e6" text-anchor="middle" textLength="8.4" lengthAdjust="spacingAndGlyphs" stroke="#e6e6e6" stroke-width="0.3">0</text>
<line x1="1554.1" y1="492.2" x2="1554.1" y2="497.7" stroke="#c4c4c4" stroke-width="1.3"/>
<text x="1554.1" y="513.7" font-size="15.12" fill="#e6e6e6" text-anchor="middle" textLength="16.8" lengthAdjust="spacingAndGlyphs" stroke="#e6e6e6" stroke-width="0.3">20</text>
<line x1="1638.2" y1="492.2" x2="1638.2" y2="497.7" stroke="#c4c4c4" stroke-width="1.3"/>
<text x="1638.2" y="513.7" font-size="15.12" fill="#e6e6e6" text-anchor="middle" textLength="16.8" lengthAdjust="spacingAndGlyphs" stroke="#e6e6e6" stroke-width="0.3">40</text>
<line x1="1722.4" y1="492.2" x2="1722.4" y2="497.7" stroke="#c4c4c4" stroke-width="1.3"/>
<text x="1722.4" y="513.7" font-size="15.12" fill="#e6e6e6" text-anchor="middle" textLength="16.8" lengthAdjust="spacingAndGlyphs" stroke="#e6e6e6" stroke-width="0.3">60</text>
<line x1="1806.5" y1="492.2" x2="1806.5" y2="497.7" stroke="#c4c4c4" stroke-width="1.3"/>
<text x="1806.5" y="513.7" font-size="15.12" fill="#e6e6e6" text-anchor="middle" textLength="16.8" lengthAdjust="spacingAndGlyphs" stroke="#e6e6e6" stroke-width="0.3">80</text>
<line x1="1890.6" y1="492.2" x2="1890.6" y2="497.7" stroke="#c4c4c4" stroke-width="1.3"/>
<text x="1890.6" y="513.7" font-size="15.12" fill="#e6e6e6" text-anchor="middle" textLength="25.2" lengthAdjust="spacingAndGlyphs" stroke="#e6e6e6" stroke-width="0.3">100</text>
<text x="1499.2" y="557.5" font-size="30.52" fill="#f0f0f0" text-anchor="start" textLength="335.0" lengthAdjust="spacingAndGlyphs" stroke="#f0f0f0" stroke-width="0.44999999999999996">Average Gamma: 2.174</text>
<text x="339.5" y="708.8" font-size="12.21" fill="#ffffff" text-anchor="middle" textLength="6.8" lengthAdjust="spacingAndGlyphs" stroke="#ffffff" stroke-width="0.3">0</text>
<text x="488.5" y="708.8" font-size="12.21" fill="#ffffff" text-anchor="middle" textLength="13.6" lengthAdjust="spacingAndGlyphs" stroke="#ffffff" stroke-width="0.3">10</text>
<text x="637.5" y="708.8" font-size="12.21" fill="#ffffff" text-anchor="middle" textLength="13.6" lengthAdjust="spacingAndGlyphs" stroke="#ffffff" stroke-width="0.3">20</text>
<text x="786.5" y="708.8" font-size="12.21" fill="#ffffff" text-anchor="middle" textLength="13.6" lengthAdjust="spacingAndGlyphs" stroke="#ffffff" stroke-width="0.3">30</text>
<text x="935.5" y="708.8" font-size="12.21" fill="#ffffff" text-anchor="middle" textLength="13.6" lengthAdjust="spacingAndGlyphs" stroke="#ffffff" stroke-width="0.3">40</text>
<text x="1084.5" y="708.8" font-size="12.21" fill="#ffffff" text-anchor="middle" textLength="13.6" lengthAdjust="spacingAndGlyphs" stroke="#ffffff" stroke-width="0.3">50</text>
<text x="1233.5" y="708.8" font-size="12.21" fill="#ffffff" text-anchor="middle" textLength="13.6" lengthAdjust="spacingAndGlyphs" stroke="#ffffff" stroke-width="0.3">60</text>
<text x="1382.5" y="708.8" font-size="12.21" fill="#ffffff" text-anchor="middle" textLength="13.6" lengthAdjust="spacingAndGlyphs" stroke="#ffffff" stroke-width="0.3">70</text>
<text x="1531.5" y="708.8" font-size="12.21" fill="#ffffff" text-anchor="middle" textLength="13.6" lengthAdjust="spacingAndGlyphs" stroke="#ffffff" stroke-width="0.3">80</text>
<text x="1680.5" y="708.8" font-size="12.21" fill="#ffffff" text-anchor="middle" textLength="13.6" lengthAdjust="spacingAndGlyphs" stroke="#ffffff" stroke-width="0.3">90</text>
<text x="1829.5" y="708.8" font-size="12.21" fill="#ffffff" text-anchor="middle" textLength="20.4" lengthAdjust="spacingAndGlyphs" stroke="#ffffff" stroke-width="0.3">100</text>
<text transform="translate(266,609.500) rotate(-90)" font-size="14.300" fill="#ffffff" text-anchor="middle" textLength="37" lengthAdjust="spacingAndGlyphs">Actual</text>
<text transform="translate(266,670.500) rotate(-90)" font-size="14.300" fill="#ffffff" text-anchor="middle" textLength="37" lengthAdjust="spacingAndGlyphs">Target</text>
<text x="173.0" y="789.8" font-size="31.98" fill="#f0f0f0" text-anchor="start" textLength="232.0" lengthAdjust="spacingAndGlyphs" stroke="#f0f0f0" stroke-width="0.44999999999999996">Current Reading</text>
<text x="173.0" y="834.0" font-size="25.73" fill="#f0f0f0" text-anchor="start" textLength="93.0" lengthAdjust="spacingAndGlyphs" stroke="#f0f0f0" stroke-width="0.44999999999999996">x: 0.312</text>
<text x="331.7" y="834.0" font-size="25.73" fill="#f0f0f0" text-anchor="start" textLength="94.0" lengthAdjust="spacingAndGlyphs" stroke="#f0f0f0" stroke-width="0.44999999999999996">y: 0.329</text>
<text x="173.0" y="870.5" font-size="25.73" fill="#f0f0f0" text-anchor="start" textLength="118.0" lengthAdjust="spacingAndGlyphs" stroke="#f0f0f0" stroke-width="0.44999999999999996">u': 0.1974</text>
<text x="331.7" y="870.5" font-size="25.73" fill="#f0f0f0" text-anchor="start" textLength="115.0" lengthAdjust="spacingAndGlyphs" stroke="#f0f0f0" stroke-width="0.44999999999999996">v': 0.4682</text>
<text x="173.0" y="906.6" font-size="25.73" fill="#f0f0f0" text-anchor="start" textLength="198.5" lengthAdjust="spacingAndGlyphs" stroke="#f0f0f0" stroke-width="0.44999999999999996">cd/m²: 333.0416</text>
<text x="173.0" y="943.0" font-size="25.73" fill="#f0f0f0" text-anchor="start" textLength="163.0" lengthAdjust="spacingAndGlyphs" stroke="#f0f0f0" stroke-width="0.44999999999999996">ΔE 2000: 0.54</text>
<text x="652.3" y="752.9" font-size="15.12" fill="#e6e6e6" text-anchor="middle" textLength="79.6" lengthAdjust="spacingAndGlyphs" stroke="#e6e6e6" stroke-width="0.3">CIE 1931 xy</text>
<g clip-path="url(#cpbg)"><g filter="url(#fbl)"><rect x="524.5" y="746.6" width="12.7" height="12.3" fill="#80ffca"/><rect x="536.7" y="746.6" width="12.7" height="12.3" fill="#86ffca"/><rect x="548.9" y="746.6" width="12.7" height="12.3" fill="#8cffca"/><rect x="561.1" y="746.6" width="12.7" height="12.3" fill="#93ffc9"/><rect x="573.3" y="746.6" width="12.7" height="12.3" fill="#99ffc9"/><rect x="585.5" y="746.6" width="12.7" height="12.3" fill="#9fffc9"/><rect x="597.7" y="746.6" width="12.7" height="12.3" fill="#a6ffc8"/><rect x="609.9" y="746.6" width="12.7" height="12.3" fill="#adffc8"/><rect x="622.1" y="746.6" width="12.7" height="12.3" fill="#b3ffc8"/><rect x="634.3" y="746.6" width="12.7" height="12.3" fill="#baffc7"/><rect x="646.5" y="746.6" width="12.7" height="12.3" fill="#c1ffc7"/><rect x="658.7" y="746.6" width="12.7" height="12.3" fill="#c8ffc7"/><rect x="670.9" y="746.6" width="12.7" height="12.3" fill="#cfffc7"/><rect x="683.1" y="746.6" width="12.7" height="12.3" fill="#d6ffc6"/><rect x="695.3" y="746.6" width="12.7" height="12.3" fill="#ddffc6"/><rect x="707.5" y="746.6" width="12.7" height="12.3" fill="#e4ffc5"/><rect x="719.7" y="746.6" width="12.7" height="12.3" fill="#ecffc5"/><rect x="731.9" y="746.6" width="12.7" height="12.3" fill="#f3ffc5"/><rect x="744.1" y="746.6" width="12.7" height="12.3" fill="#faffc4"/><rect x="756.3" y="746.6" width="12.7" height="12.3" fill="#fffcc2"/><rect x="768.5" y="746.6" width="12.7" height="12.3" fill="#fff5bc"/><rect x="780.7" y="746.6" width="12.7" height="12.3" fill="#ffeeb6"/><rect x="792.9" y="746.6" width="12.7" height="12.3" fill="#ffe7b1"/><rect x="805.1" y="746.6" width="12.7" height="12.3" fill="#ffe0ab"/><rect x="524.5" y="758.4" width="12.7" height="12.3" fill="#84ffd0"/><rect x="536.7" y="758.4" width="12.7" height="12.3" fill="#8affd0"/><rect x="548.9" y="758.4" width="12.7" height="12.3" fill="#91ffcf"/><rect x="561.1" y="758.4" width="12.7" height="12.3" fill="#97ffcf"/><rect x="573.3" y="758.4" width="12.7" height="12.3" fill="#9effcf"/><rect x="585.5" y="758.4" width="12.7" height="12.3" fill="#a4ffcf"/><rect x="597.7" y="758.4" width="12.7" height="12.3" fill="#abffce"/><rect x="609.9" y="758.4" width="12.7" height="12.3" fill="#b2ffce"/><rect x="622.1" y="758.4" width="12.7" height="12.3" fill="#b8ffce"/><rect x="634.3" y="758.4" width="12.7" height="12.3" fill="#bfffcd"/><rect x="646.5" y="758.4" width="12.7" height="12.3" fill="#c6ffcd"/><rect x="658.7" y="758.4" width="12.7" height="12.3" fill="#cdffcd"/><rect x="670.9" y="758.4" width="12.7" height="12.3" fill="#d4ffcd"/><rect x="683.1" y="758.4" width="12.7" height="12.3" fill="#dcffcc"/><rect x="695.3" y="758.4" width="12.7" height="12.3" fill="#e3ffcc"/><rect x="707.5" y="758.4" width="12.7" height="12.3" fill="#eaffcc"/><rect x="719.7" y="758.4" width="12.7" height="12.3" fill="#f2ffcb"/><rect x="731.9" y="758.4" width="12.7" height="12.3" fill="#f9ffcb"/><rect x="744.1" y="758.4" width="12.7" height="12.3" fill="#fffdc9"/><rect x="756.3" y="758.4" width="12.7" height="12.3" fill="#fff5c3"/><rect x="768.5" y="758.4" width="12.7" height="12.3" fill="#ffeebd"/><rect x="780.7" y="758.4" width="12.7" height="12.3" fill="#ffe7b7"/><rect x="792.9" y="758.4" width="12.7" height="12.3" fill="#ffe1b2"/><rect x="805.1" y="758.4" width="12.7" height="12.3" fill="#ffdbac"/><rect x="524.5" y="770.2" width="12.7" height="12.3" fill="#88ffd6"/><rect x="536.7" y="770.2" width="12.7" height="12.3" fill="#8fffd6"/><rect x="548.9" y="770.2" width="12.7" height="12.3" fill="#95ffd5"/><rect x="561.1" y="770.2" width="12.7" height="12.3" fill="#9cffd5"/><rect x="573.3" y="770.2" width="12.7" height="12.3" fill="#a2ffd5"/><rect x="585.5" y="770.2" width="12.7" height="12.3" fill="#a9ffd5"/><rect x="597.7" y="770.2" width="12.7" height="12.3" fill="#b0ffd4"/><rect x="609.9" y="770.2" width="12.7" height="12.3" fill="#b7ffd4"/><rect x="622.1" y="770.2" width="12.7" height="12.3" fill="#beffd4"/><rect x="634.3" y="770.2" width="12.7" height="12.3" fill="#c5ffd4"/><rect x="646.5" y="770.2" width="12.7" height="12.3" fill="#ccffd3"/><rect x="658.7" y="770.2" width="12.7" height="12.3" fill="#d3ffd3"/><rect x="670.9" y="770.2" width="12.7" height="12.3" fill="#daffd3"/><rect x="683.1" y="770.2" width="12.7" height="12.3" fill="#e2ffd3"/><rect x="695.3" y="770.2" width="12.7" height="12.3" fill="#e9ffd2"/><rect x="707.5" y="770.2" width="12.7" height="12.3" fill="#f1ffd2"/><rect x="719.7" y="770.2" width="12.7" height="12.3" fill="#f8ffd2"/><rect x="731.9" y="770.2" width="12.7" height="12.3" fill="#fffed1"/><rect x="744.1" y="770.2" width="12.7" height="12.3" fill="#fff6ca"/><rect x="756.3" y="770.2" width="12.7" height="12.3" fill="#ffefc4"/><rect x="768.5" y="770.2" width="12.7" height="12.3" fill="#ffe8be"/><rect x="780.7" y="770.2" width="12.7" height="12.3" fill="#ffe1b8"/><rect x="792.9" y="770.2" width="12.7" height="12.3" fill="#ffdbb3"/><rect x="805.1" y="770.2" width="12.7" height="12.3" fill="#ffd5ae"/><rect x="524.5" y="782.0" width="12.7" height="12.3" fill="#8dffdc"/><rect x="536.7" y="782.0" width="12.7" height="12.3" fill="#93ffdc"/><rect x="548.9" y="782.0" width="12.7" height="12.3" fill="#9affdc"/><rect x="561.1" y="782.0" width="12.7" height="12.3" fill="#a1ffdb"/><rect x="573.3" y="782.0" width="12.7" height="12.3" fill="#a7ffdb"/><rect x="585.5" y="782.0" width="12.7" height="12.3" fill="#aeffdb"/><rect x="597.7" y="782.0" width="12.7" height="12.3" fill="#b5ffdb"/><rect x="609.9" y="782.0" width="12.7" height="12.3" fill="#bcffdb"/><rect x="622.1" y="782.0" width="12.7" height="12.3" fill="#c3ffda"/><rect x="634.3" y="782.0" width="12.7" height="12.3" fill="#caffda"/><rect x="646.5" y="782.0" width="12.7" height="12.3" fill="#d2ffda"/><rect x="658.7" y="782.0" width="12.7" height="12.3" fill="#d9ffda"/><rect x="670.9" y="782.0" width="12.7" height="12.3" fill="#e0ffd9"/><rect x="683.1" y="782.0" width="12.7" height="12.3" fill="#e8ffd9"/><rect x="695.3" y="782.0" width="12.7" height="12.3" fill="#f0ffd9"/><rect x="707.5" y="782.0" width="12.7" height="12.3" fill="#f7ffd9"/><rect x="719.7" y="782.0" width="12.7" height="12.3" fill="#ffffd8"/><rect x="731.9" y="782.0" width="12.7" height="12.3" fill="#fff7d2"/><rect x="744.1" y="782.0" width="12.7" height="12.3" fill="#fff0cb"/><rect x="756.3" y="782.0" width="12.7" height="12.3" fill="#ffe9c5"/><rect x="768.5" y="782.0" width="12.7" height="12.3" fill="#ffe2bf"/><rect x="780.7" y="782.0" width="12.7" height="12.3" fill="#ffdcb9"/><rect x="792.9" y="782.0" width="12.7" height="12.3" fill="#ffd5b4"/><rect x="805.1" y="782.0" width="12.7" height="12.3" fill="#ffd0af"/><rect x="524.5" y="793.8" width="12.7" height="12.3" fill="#91ffe2"/><rect x="536.7" y="793.8" width="12.7" height="12.3" fill="#98ffe2"/><rect x="548.9" y="793.8" width="12.7" height="12.3" fill="#9fffe2"/><rect x="561.1" y="793.8" width="12.7" height="12.3" fill="#a5ffe2"/><rect x="573.3" y="793.8" width="12.7" height="12.3" fill="#acffe2"/><rect x="585.5" y="793.8" width="12.7" height="12.3" fill="#b3ffe1"/><rect x="597.7" y="793.8" width="12.7" height="12.3" fill="#baffe1"/><rect x="609.9" y="793.8" width="12.7" height="12.3" fill="#c2ffe1"/><rect x="622.1" y="793.8" width="12.7" height="12.3" fill="#c9ffe1"/><rect x="634.3" y="793.8" width="12.7" height="12.3" fill="#d0ffe1"/><rect x="646.5" y="793.8" width="12.7" height="12.3" fill="#d8ffe1"/><rect x="658.7" y="793.8" width="12.7" height="12.3" fill="#dfffe0"/><rect x="670.9" y="793.8" width="12.7" height="12.3" fill="#e7ffe0"/><rect x="683.1" y="793.8" width="12.7" height="12.3" fill="#eeffe0"/><rect x="695.3" y="793.8" width="12.7" height="12.3" fill="#f6ffe0"/><rect x="707.5" y="793.8" width="12.7" height="12.3" fill="#feffe0"/><rect x="719.7" y="793.8" width="12.7" height="12.3" fill="#fff8d9"/><rect x="731.9" y="793.8" width="12.7" height="12.3" fill="#fff0d2"/><rect x="744.1" y="793.8" width="12.7" height="12.3" fill="#ffe9cc"/><rect x="756.3" y="793.8" width="12.7" height="12.3" fill="#ffe3c6"/><rect x="768.5" y="793.8" width="12.7" height="12.3" fill="#ffdcc0"/><rect x="780.7" y="793.8" width="12.7" height="12.3" fill="#ffd6ba"/><rect x="792.9" y="793.8" width="12.7" height="12.3" fill="#ffd0b5"/><rect x="805.1" y="793.8" width="12.7" height="12.3" fill="#ffcab0"/><rect x="524.5" y="805.6" width="12.7" height="12.3" fill="#96ffe9"/><rect x="536.7" y="805.6" width="12.7" height="12.3" fill="#9dffe9"/><rect x="548.9" y="805.6" width="12.7" height="12.3" fill="#a4ffe8"/><rect x="561.1" y="805.6" width="12.7" height="12.3" fill="#abffe8"/><rect x="573.3" y="805.6" width="12.7" height="12.3" fill="#b2ffe8"/><rect x="585.5" y="805.6" width="12.7" height="12.3" fill="#b9ffe8"/><rect x="597.7" y="805.6" width="12.7" height="12.3" fill="#c0ffe8"/><rect x="609.9" y="805.6" width="12.7" height="12.3" fill="#c7ffe8"/><rect x="622.1" y="805.6" width="12.7" height="12.3" fill="#cfffe8"/><rect x="634.3" y="805.6" width="12.7" height="12.3" fill="#d6ffe8"/><rect x="646.5" y="805.6" width="12.7" height="12.3" fill="#deffe7"/><rect x="658.7" y="805.6" width="12.7" height="12.3" fill="#e5ffe7"/><rect x="670.9" y="805.6" width="12.7" height="12.3" fill="#edffe7"/><rect x="683.1" y="805.6" width="12.7" height="12.3" fill="#f5ffe7"/><rect x="695.3" y="805.6" width="12.7" height="12.3" fill="#fdffe7"/><rect x="707.5" y="805.6" width="12.7" height="12.3" fill="#fff9e1"/><rect x="719.7" y="805.6" width="12.7" height="12.3" fill="#fff1da"/><rect x="731.9" y="805.6" width="12.7" height="12.3" fill="#ffead3"/><rect x="744.1" y="805.6" width="12.7" height="12.3" fill="#ffe3cd"/><rect x="756.3" y="805.6" width="12.7" height="12.3" fill="#ffdcc7"/><rect x="768.5" y="805.6" width="12.7" height="12.3" fill="#ffd6c1"/><rect x="780.7" y="805.6" width="12.7" height="12.3" fill="#ffd0bb"/><rect x="792.9" y="805.6" width="12.7" height="12.3" fill="#ffcab6"/><rect x="805.1" y="805.6" width="12.7" height="12.3" fill="#ffc5b1"/><rect x="524.5" y="817.4" width="12.7" height="12.3" fill="#9bffef"/><rect x="536.7" y="817.4" width="12.7" height="12.3" fill="#a2ffef"/><rect x="548.9" y="817.4" width="12.7" height="12.3" fill="#a9ffef"/><rect x="561.1" y="817.4" width="12.7" height="12.3" fill="#b0ffef"/><rect x="573.3" y="817.4" width="12.7" height="12.3" fill="#b7ffef"/><rect x="585.5" y="817.4" width="12.7" height="12.3" fill="#beffef"/><rect x="597.7" y="817.4" width="12.7" height="12.3" fill="#c6ffef"/><rect x="609.9" y="817.4" width="12.7" height="12.3" fill="#cdffef"/><rect x="622.1" y="817.4" width="12.7" height="12.3" fill="#d5ffef"/><rect x="634.3" y="817.4" width="12.7" height="12.3" fill="#dcffef"/><rect x="646.5" y="817.4" width="12.7" height="12.3" fill="#e4ffef"/><rect x="658.7" y="817.4" width="12.7" height="12.3" fill="#ecffee"/><rect x="670.9" y="817.4" width="12.7" height="12.3" fill="#f4ffee"/><rect x="683.1" y="817.4" width="12.7" height="12.3" fill="#fcffee"/><rect x="695.3" y="817.4" width="12.7" height="12.3" fill="#fffae9"/><rect x="707.5" y="817.4" width="12.7" height="12.3" fill="#fff2e2"/><rect x="719.7" y="817.4" width="12.7" height="12.3" fill="#ffebdb"/><rect x="731.9" y="817.4" width="12.7" height="12.3" fill="#ffe4d4"/><rect x="744.1" y="817.4" width="12.7" height="12.3" fill="#ffddce"/><rect x="756.3" y="817.4" width="12.7" height="12.3" fill="#ffd6c8"/><rect x="768.5" y="817.4" width="12.7" height="12.3" fill="#ffd0c2"/><rect x="780.7" y="817.4" width="12.7" height="12.3" fill="#ffcabd"/><rect x="792.9" y="817.4" width="12.7" height="12.3" fill="#ffc5b7"/><rect x="805.1" y="817.4" width="12.7" height="12.3" fill="#ffbfb2"/><rect x="524.5" y="829.2" width="12.7" height="12.3" fill="#a0fff6"/><rect x="536.7" y="829.2" width="12.7" height="12.3" fill="#a7fff6"/><rect x="548.9" y="829.2" width="12.7" height="12.3" fill="#aefff6"/><rect x="561.1" y="829.2" width="12.7" height="12.3" fill="#b5fff6"/><rect x="573.3" y="829.2" width="12.7" height="12.3" fill="#bdfff6"/><rect x="585.5" y="829.2" width="12.7" height="12.3" fill="#c4fff6"/><rect x="597.7" y="829.2" width="12.7" height="12.3" fill="#ccfff6"/><rect x="609.9" y="829.2" width="12.7" height="12.3" fill="#d3fff6"/><rect x="622.1" y="829.2" width="12.7" height="12.3" fill="#dbfff6"/><rect x="634.3" y="829.2" width="12.7" height="12.3" fill="#e3fff6"/><rect x="646.5" y="829.2" width="12.7" height="12.3" fill="#ebfff6"/><rect x="658.7" y="829.2" width="12.7" height="12.3" fill="#f3fff6"/><rect x="670.9" y="829.2" width="12.7" height="12.3" fill="#fbfff6"/><rect x="683.1" y="829.2" width="12.7" height="12.3" fill="#fffbf2"/><rect x="695.3" y="829.2" width="12.7" height="12.3" fill="#fff3ea"/><rect x="707.5" y="829.2" width="12.7" height="12.3" fill="#ffebe3"/><rect x="719.7" y="829.2" width="12.7" height="12.3" fill="#ffe4dc"/><rect x="731.9" y="829.2" width="12.7" height="12.3" fill="#ffddd5"/><rect x="744.1" y="829.2" width="12.7" height="12.3" fill="#ffd7cf"/><rect x="756.3" y="829.2" width="12.7" height="12.3" fill="#ffd1c9"/><rect x="768.5" y="829.2" width="12.7" height="12.3" fill="#ffcbc3"/><rect x="780.7" y="829.2" width="12.7" height="12.3" fill="#ffc5be"/><rect x="792.9" y="829.2" width="12.7" height="12.3" fill="#ffc0b8"/><rect x="805.1" y="829.2" width="12.7" height="12.3" fill="#ffbab3"/><rect x="524.5" y="841.0" width="12.7" height="12.3" fill="#a5fffe"/><rect x="536.7" y="841.0" width="12.7" height="12.3" fill="#acfffe"/><rect x="548.9" y="841.0" width="12.7" height="12.3" fill="#b4fffe"/><rect x="561.1" y="841.0" width="12.7" height="12.3" fill="#bbfffe"/><rect x="573.3" y="841.0" width="12.7" height="12.3" fill="#c2fffe"/><rect x="585.5" y="841.0" width="12.7" height="12.3" fill="#cafffe"/><rect x="597.7" y="841.0" width="12.7" height="12.3" fill="#d2fffe"/><rect x="609.9" y="841.0" width="12.7" height="12.3" fill="#dafffe"/><rect x="622.1" y="841.0" width="12.7" height="12.3" fill="#e2fffe"/><rect x="634.3" y="841.0" width="12.7" height="12.3" fill="#eafffe"/><rect x="646.5" y="841.0" width="12.7" height="12.3" fill="#f2fffe"/><rect x="658.7" y="841.0" width="12.7" height="12.3" fill="#fafffe"/><rect x="670.9" y="841.0" width="12.7" height="12.3" fill="#fffcfa"/><rect x="683.1" y="841.0" width="12.7" height="12.3" fill="#fff4f2"/><rect x="695.3" y="841.0" width="12.7" height="12.3" fill="#ffeceb"/><rect x="707.5" y="841.0" width="12.7" height="12.3" fill="#ffe5e4"/><rect x="719.7" y="841.0" width="12.7" height="12.3" fill="#ffdedd"/><rect x="731.9" y="841.0" width="12.7" height="12.3" fill="#ffd7d6"/><rect x="744.1" y="841.0" width="12.7" height="12.3" fill="#ffd1d0"/><rect x="756.3" y="841.0" width="12.7" height="12.3" fill="#ffcbca"/><rect x="768.5" y="841.0" width="12.7" height="12.3" fill="#ffc5c4"/><rect x="780.7" y="841.0" width="12.7" height="12.3" fill="#ffc0bf"/><rect x="792.9" y="841.0" width="12.7" height="12.3" fill="#ffbab9"/><rect x="805.1" y="841.0" width="12.7" height="12.3" fill="#ffb5b4"/><rect x="524.5" y="852.8" width="12.7" height="12.3" fill="#a6f9ff"/><rect x="536.7" y="852.8" width="12.7" height="12.3" fill="#aef9ff"/><rect x="548.9" y="852.8" width="12.7" height="12.3" fill="#b5f9ff"/><rect x="561.1" y="852.8" width="12.7" height="12.3" fill="#bcf9ff"/><rect x="573.3" y="852.8" width="12.7" height="12.3" fill="#c4f9ff"/><rect x="585.5" y="852.8" width="12.7" height="12.3" fill="#cbf9ff"/><rect x="597.7" y="852.8" width="12.7" height="12.3" fill="#d3f9ff"/><rect x="609.9" y="852.8" width="12.7" height="12.3" fill="#dbf9ff"/><rect x="622.1" y="852.8" width="12.7" height="12.3" fill="#e3f9ff"/><rect x="634.3" y="852.8" width="12.7" height="12.3" fill="#ebf9ff"/><rect x="646.5" y="852.8" width="12.7" height="12.3" fill="#f3f9ff"/><rect x="658.7" y="852.8" width="12.7" height="12.3" fill="#fbf9ff"/><rect x="670.9" y="852.8" width="12.7" height="12.3" fill="#fff5fb"/><rect x="683.1" y="852.8" width="12.7" height="12.3" fill="#ffedf3"/><rect x="695.3" y="852.8" width="12.7" height="12.3" fill="#ffe5eb"/><rect x="707.5" y="852.8" width="12.7" height="12.3" fill="#ffdee4"/><rect x="719.7" y="852.8" width="12.7" height="12.3" fill="#ffd8dd"/><rect x="731.9" y="852.8" width="12.7" height="12.3" fill="#ffd1d7"/><rect x="744.1" y="852.8" width="12.7" height="12.3" fill="#ffcbd1"/><rect x="756.3" y="852.8" width="12.7" height="12.3" fill="#ffc5cb"/><rect x="768.5" y="852.8" width="12.7" height="12.3" fill="#ffc0c5"/><rect x="780.7" y="852.8" width="12.7" height="12.3" fill="#ffbac0"/><rect x="792.9" y="852.8" width="12.7" height="12.3" fill="#ffb5ba"/><rect x="805.1" y="852.8" width="12.7" height="12.3" fill="#ffb0b5"/><rect x="524.5" y="864.6" width="12.7" height="12.3" fill="#a7f2ff"/><rect x="536.7" y="864.6" width="12.7" height="12.3" fill="#aef2ff"/><rect x="548.9" y="864.6" width="12.7" height="12.3" fill="#b5f2ff"/><rect x="561.1" y="864.6" width="12.7" height="12.3" fill="#bdf2ff"/><rect x="573.3" y="864.6" width="12.7" height="12.3" fill="#c4f2ff"/><rect x="585.5" y="864.6" width="12.7" height="12.3" fill="#cbf2ff"/><rect x="597.7" y="864.6" width="12.7" height="12.3" fill="#d3f2ff"/><rect x="609.9" y="864.6" width="12.7" height="12.3" fill="#dbf1ff"/><rect x="622.1" y="864.6" width="12.7" height="12.3" fill="#e2f1ff"/><rect x="634.3" y="864.6" width="12.7" height="12.3" fill="#eaf1ff"/><rect x="646.5" y="864.6" width="12.7" height="12.3" fill="#f2f1ff"/><rect x="658.7" y="864.6" width="12.7" height="12.3" fill="#faf1ff"/><rect x="670.9" y="864.6" width="12.7" height="12.3" fill="#ffeefb"/><rect x="683.1" y="864.6" width="12.7" height="12.3" fill="#ffe6f4"/><rect x="695.3" y="864.6" width="12.7" height="12.3" fill="#ffdfec"/><rect x="707.5" y="864.6" width="12.7" height="12.3" fill="#ffd8e5"/><rect x="719.7" y="864.6" width="12.7" height="12.3" fill="#ffd2de"/><rect x="731.9" y="864.6" width="12.7" height="12.3" fill="#ffcbd8"/><rect x="744.1" y="864.6" width="12.7" height="12.3" fill="#ffc5d2"/><rect x="756.3" y="864.6" width="12.7" height="12.3" fill="#ffc0cc"/><rect x="768.5" y="864.6" width="12.7" height="12.3" fill="#ffbac6"/><rect x="780.7" y="864.6" width="12.7" height="12.3" fill="#ffb5c1"/><rect x="792.9" y="864.6" width="12.7" height="12.3" fill="#ffb0bb"/><rect x="805.1" y="864.6" width="12.7" height="12.3" fill="#ffabb6"/><rect x="524.5" y="876.4" width="12.7" height="12.3" fill="#a7ebff"/><rect x="536.7" y="876.4" width="12.7" height="12.3" fill="#aeebff"/><rect x="548.9" y="876.4" width="12.7" height="12.3" fill="#b6ebff"/><rect x="561.1" y="876.4" width="12.7" height="12.3" fill="#bdebff"/><rect x="573.3" y="876.4" width="12.7" height="12.3" fill="#c4ebff"/><rect x="585.5" y="876.4" width="12.7" height="12.3" fill="#cbeaff"/><rect x="597.7" y="876.4" width="12.7" height="12.3" fill="#d3eaff"/><rect x="609.9" y="876.4" width="12.7" height="12.3" fill="#dbeaff"/><rect x="622.1" y="876.4" width="12.7" height="12.3" fill="#e2eaff"/><rect x="634.3" y="876.4" width="12.7" height="12.3" fill="#eaeaff"/><rect x="646.5" y="876.4" width="12.7" height="12.3" fill="#f2eaff"/><rect x="658.7" y="876.4" width="12.7" height="12.3" fill="#faeaff"/><rect x="670.9" y="876.4" width="12.7" height="12.3" fill="#ffe7fc"/><rect x="683.1" y="876.4" width="12.7" height="12.3" fill="#ffdff4"/><rect x="695.3" y="876.4" width="12.7" height="12.3" fill="#ffd8ed"/><rect x="707.5" y="876.4" width="12.7" height="12.3" fill="#ffd2e6"/><rect x="719.7" y="876.4" width="12.7" height="12.3" fill="#ffccdf"/><rect x="731.9" y="876.4" width="12.7" height="12.3" fill="#ffc6d9"/><rect x="744.1" y="876.4" width="12.7" height="12.3" fill="#ffc0d2"/><rect x="756.3" y="876.4" width="12.7" height="12.3" fill="#ffbacd"/><rect x="768.5" y="876.4" width="12.7" height="12.3" fill="#ffb5c7"/><rect x="780.7" y="876.4" width="12.7" height="12.3" fill="#ffb0c1"/><rect x="792.9" y="876.4" width="12.7" height="12.3" fill="#ffabbc"/><rect x="805.1" y="876.4" width="12.7" height="12.3" fill="#ffa6b7"/><rect x="524.5" y="888.2" width="12.7" height="12.3" fill="#a8e4ff"/><rect x="536.7" y="888.2" width="12.7" height="12.3" fill="#afe4ff"/><rect x="548.9" y="888.2" width="12.7" height="12.3" fill="#b6e4ff"/><rect x="561.1" y="888.2" width="12.7" height="12.3" fill="#bde4ff"/><rect x="573.3" y="888.2" width="12.7" height="12.3" fill="#c4e4ff"/><rect x="585.5" y="888.2" width="12.7" height="12.3" fill="#cce3ff"/><rect x="597.7" y="888.2" width="12.7" height="12.3" fill="#d3e3ff"/><rect x="609.9" y="888.2" width="12.7" height="12.3" fill="#dae3ff"/><rect x="622.1" y="888.2" width="12.7" height="12.3" fill="#e2e3ff"/><rect x="634.3" y="888.2" width="12.7" height="12.3" fill="#eae3ff"/><rect x="646.5" y="888.2" width="12.7" height="12.3" fill="#f2e2ff"/><rect x="658.7" y="888.2" width="12.7" height="12.3" fill="#f9e2ff"/><rect x="670.9" y="888.2" width="12.7" height="12.3" fill="#ffe0fd"/><rect x="683.1" y="888.2" width="12.7" height="12.3" fill="#ffd9f5"/><rect x="695.3" y="888.2" width="12.7" height="12.3" fill="#ffd2ee"/><rect x="707.5" y="888.2" width="12.7" height="12.3" fill="#ffcce7"/><rect x="719.7" y="888.2" width="12.7" height="12.3" fill="#ffc6e0"/><rect x="731.9" y="888.2" width="12.7" height="12.3" fill="#ffc0d9"/><rect x="744.1" y="888.2" width="12.7" height="12.3" fill="#ffbad3"/><rect x="756.3" y="888.2" width="12.7" height="12.3" fill="#ffb5cd"/><rect x="768.5" y="888.2" width="12.7" height="12.3" fill="#ffb0c8"/><rect x="780.7" y="888.2" width="12.7" height="12.3" fill="#ffabc2"/><rect x="792.9" y="888.2" width="12.7" height="12.3" fill="#ffa6bd"/><rect x="805.1" y="888.2" width="12.7" height="12.3" fill="#ffa2b8"/><rect x="524.5" y="900.0" width="12.7" height="12.3" fill="#a8deff"/><rect x="536.7" y="900.0" width="12.7" height="12.3" fill="#afddff"/><rect x="548.9" y="900.0" width="12.7" height="12.3" fill="#b6ddff"/><rect x="561.1" y="900.0" width="12.7" height="12.3" fill="#bdddff"/><rect x="573.3" y="900.0" width="12.7" height="12.3" fill="#c4ddff"/><rect x="585.5" y="900.0" width="12.7" height="12.3" fill="#ccddff"/><rect x="597.7" y="900.0" width="12.7" height="12.3" fill="#d3dcff"/><rect x="609.9" y="900.0" width="12.7" height="12.3" fill="#dadcff"/><rect x="622.1" y="900.0" width="12.7" height="12.3" fill="#e2dcff"/><rect x="634.3" y="900.0" width="12.7" height="12.3" fill="#e9dcff"/><rect x="646.5" y="900.0" width="12.7" height="12.3" fill="#f1dbff"/><rect x="658.7" y="900.0" width="12.7" height="12.3" fill="#f9dbff"/><rect x="670.9" y="900.0" width="12.7" height="12.3" fill="#ffd9fd"/><rect x="683.1" y="900.0" width="12.7" height="12.3" fill="#ffd3f6"/><rect x="695.3" y="900.0" width="12.7" height="12.3" fill="#ffccee"/><rect x="707.5" y="900.0" width="12.7" height="12.3" fill="#ffc6e7"/><rect x="719.7" y="900.0" width="12.7" height="12.3" fill="#ffc0e1"/><rect x="731.9" y="900.0" width="12.7" height="12.3" fill="#ffbada"/><rect x="744.1" y="900.0" width="12.7" height="12.3" fill="#ffb5d4"/><rect x="756.3" y="900.0" width="12.7" height="12.3" fill="#ffb0ce"/><rect x="768.5" y="900.0" width="12.7" height="12.3" fill="#ffabc9"/><rect x="780.7" y="900.0" width="12.7" height="12.3" fill="#ffa6c3"/><rect x="792.9" y="900.0" width="12.7" height="12.3" fill="#ffa1be"/><rect x="805.1" y="900.0" width="12.7" height="12.3" fill="#ff9db9"/><rect x="524.5" y="911.8" width="12.7" height="12.3" fill="#a9d7ff"/><rect x="536.7" y="911.8" width="12.7" height="12.3" fill="#b0d7ff"/><rect x="548.9" y="911.8" width="12.7" height="12.3" fill="#b7d7ff"/><rect x="561.1" y="911.8" width="12.7" height="12.3" fill="#bdd6ff"/><rect x="573.3" y="911.8" width="12.7" height="12.3" fill="#c5d6ff"/><rect x="585.5" y="911.8" width="12.7" height="12.3" fill="#ccd6ff"/><rect x="597.7" y="911.8" width="12.7" height="12.3" fill="#d3d6ff"/><rect x="609.9" y="911.8" width="12.7" height="12.3" fill="#dad5ff"/><rect x="622.1" y="911.8" width="12.7" height="12.3" fill="#e2d5ff"/><rect x="634.3" y="911.8" width="12.7" height="12.3" fill="#e9d5ff"/><rect x="646.5" y="911.8" width="12.7" height="12.3" fill="#f1d5ff"/><rect x="658.7" y="911.8" width="12.7" height="12.3" fill="#f8d4ff"/><rect x="670.9" y="911.8" width="12.7" height="12.3" fill="#ffd3fe"/><rect x="683.1" y="911.8" width="12.7" height="12.3" fill="#ffccf6"/><rect x="695.3" y="911.8" width="12.7" height="12.3" fill="#ffc6ef"/><rect x="707.5" y="911.8" width="12.7" height="12.3" fill="#ffc0e8"/><rect x="719.7" y="911.8" width="12.7" height="12.3" fill="#ffbae1"/><rect x="731.9" y="911.8" width="12.7" height="12.3" fill="#ffb5db"/><rect x="744.1" y="911.8" width="12.7" height="12.3" fill="#ffafd5"/><rect x="756.3" y="911.8" width="12.7" height="12.3" fill="#ffaacf"/><rect x="768.5" y="911.8" width="12.7" height="12.3" fill="#ffa6ca"/><rect x="780.7" y="911.8" width="12.7" height="12.3" fill="#ffa1c4"/><rect x="792.9" y="911.8" width="12.7" height="12.3" fill="#ff9cbf"/><rect x="805.1" y="911.8" width="12.7" height="12.3" fill="#ff98ba"/><rect x="524.5" y="923.6" width="12.7" height="12.3" fill="#a9d1ff"/><rect x="536.7" y="923.6" width="12.7" height="12.3" fill="#b0d1ff"/><rect x="548.9" y="923.6" width="12.7" height="12.3" fill="#b7d0ff"/><rect x="561.1" y="923.6" width="12.7" height="12.3" fill="#bed0ff"/><rect x="573.3" y="923.6" width="12.7" height="12.3" fill="#c5d0ff"/><rect x="585.5" y="923.6" width="12.7" height="12.3" fill="#cccfff"/><rect x="597.7" y="923.6" width="12.7" height="12.3" fill="#d3cfff"/><rect x="609.9" y="923.6" width="12.7" height="12.3" fill="#dacfff"/><rect x="622.1" y="923.6" width="12.7" height="12.3" fill="#e1ceff"/><rect x="634.3" y="923.6" width="12.7" height="12.3" fill="#e9ceff"/><rect x="646.5" y="923.6" width="12.7" height="12.3" fill="#f0ceff"/><rect x="658.7" y="923.6" width="12.7" height="12.3" fill="#f8cdff"/><rect x="670.9" y="923.6" width="12.7" height="12.3" fill="#ffcdfe"/><rect x="683.1" y="923.6" width="12.7" height="12.3" fill="#ffc6f7"/><rect x="695.3" y="923.6" width="12.7" height="12.3" fill="#ffc0f0"/><rect x="707.5" y="923.6" width="12.7" height="12.3" fill="#ffbae9"/><rect x="719.7" y="923.6" width="12.7" height="12.3" fill="#ffb5e2"/><rect x="731.9" y="923.6" width="12.7" height="12.3" fill="#ffafdc"/><rect x="744.1" y="923.6" width="12.7" height="12.3" fill="#ffaad6"/><rect x="756.3" y="923.6" width="12.7" height="12.3" fill="#ffa5d0"/><rect x="768.5" y="923.6" width="12.7" height="12.3" fill="#ffa1ca"/><rect x="780.7" y="923.6" width="12.7" height="12.3" fill="#ff9cc5"/><rect x="792.9" y="923.6" width="12.7" height="12.3" fill="#ff98c0"/><rect x="805.1" y="923.6" width="12.7" height="12.3" fill="#ff94bb"/><rect x="524.5" y="935.4" width="12.7" height="12.3" fill="#aacbff"/><rect x="536.7" y="935.4" width="12.7" height="12.3" fill="#b0caff"/><rect x="548.9" y="935.4" width="12.7" height="12.3" fill="#b7caff"/><rect x="561.1" y="935.4" width="12.7" height="12.3" fill="#becaff"/><rect x="573.3" y="935.4" width="12.7" height="12.3" fill="#c5c9ff"/><rect x="585.5" y="935.4" width="12.7" height="12.3" fill="#ccc9ff"/><rect x="597.7" y="935.4" width="12.7" height="12.3" fill="#d3c9ff"/><rect x="609.9" y="935.4" width="12.7" height="12.3" fill="#dac8ff"/><rect x="622.1" y="935.4" width="12.7" height="12.3" fill="#e1c8ff"/><rect x="634.3" y="935.4" width="12.7" height="12.3" fill="#e9c8ff"/><rect x="646.5" y="935.4" width="12.7" height="12.3" fill="#f0c7ff"/><rect x="658.7" y="935.4" width="12.7" height="12.3" fill="#f8c7ff"/><rect x="670.9" y="935.4" width="12.7" height="12.3" fill="#ffc6ff"/><rect x="683.1" y="935.4" width="12.7" height="12.3" fill="#ffc0f7"/><rect x="695.3" y="935.4" width="12.7" height="12.3" fill="#ffbaf0"/><rect x="707.5" y="935.4" width="12.7" height="12.3" fill="#ffb5e9"/><rect x="719.7" y="935.4" width="12.7" height="12.3" fill="#ffafe3"/><rect x="731.9" y="935.4" width="12.7" height="12.3" fill="#ffaadd"/><rect x="744.1" y="935.4" width="12.7" height="12.3" fill="#ffa5d7"/><rect x="756.3" y="935.4" width="12.7" height="12.3" fill="#ffa0d1"/><rect x="768.5" y="935.4" width="12.7" height="12.3" fill="#ff9ccb"/><rect x="780.7" y="935.4" width="12.7" height="12.3" fill="#ff97c6"/><rect x="792.9" y="935.4" width="12.7" height="12.3" fill="#ff93c1"/><rect x="805.1" y="935.4" width="12.7" height="12.3" fill="#ff8fbc"/></g></g>
<rect x="536.7" y="758.4" width="267.7" height="176.6" fill="none" stroke="#a4a4a4" stroke-width="1.300"/>
<path d="M569.500 936 Q 690 856 806 785.500" fill="none" stroke="#000" stroke-width="3.200" clip-path="url(#cpc)"/>
<line x1="530.7" y1="809.7" x2="535.9" y2="809.7" stroke="#c4c4c4" stroke-width="1.3"/>
<text x="530.0" y="815.0" font-size="15.26" fill="#e6e6e6" text-anchor="end" textLength="29.7" lengthAdjust="spacingAndGlyphs" stroke="#e6e6e6" stroke-width="0.3">0.34</text>
<line x1="530.7" y1="881.2" x2="535.9" y2="881.2" stroke="#c4c4c4" stroke-width="1.3"/>
<text x="530.0" y="886.5" font-size="15.26" fill="#e6e6e6" text-anchor="end" textLength="29.7" lengthAdjust="spacingAndGlyphs" stroke="#e6e6e6" stroke-width="0.3">0.32</text>
<line x1="548.9" y1="935.8" x2="548.9" y2="941.3" stroke="#c4c4c4" stroke-width="1.3"/>
<text x="548.9" y="956.5" font-size="15.26" fill="#e6e6e6" text-anchor="middle" textLength="29.7" lengthAdjust="spacingAndGlyphs" stroke="#e6e6e6" stroke-width="0.3">0.29</text>
<line x1="602.3" y1="935.8" x2="602.3" y2="941.3" stroke="#c4c4c4" stroke-width="1.3"/>
<text x="602.3" y="956.5" font-size="15.26" fill="#e6e6e6" text-anchor="middle" textLength="21.2" lengthAdjust="spacingAndGlyphs" stroke="#e6e6e6" stroke-width="0.3">0.3</text>
<line x1="655.7" y1="935.8" x2="655.7" y2="941.3" stroke="#c4c4c4" stroke-width="1.3"/>
<text x="655.7" y="956.5" font-size="15.26" fill="#e6e6e6" text-anchor="middle" textLength="29.7" lengthAdjust="spacingAndGlyphs" stroke="#e6e6e6" stroke-width="0.3">0.31</text>
<line x1="709.1" y1="935.8" x2="709.1" y2="941.3" stroke="#c4c4c4" stroke-width="1.3"/>
<text x="709.1" y="956.5" font-size="15.26" fill="#e6e6e6" text-anchor="middle" textLength="29.7" lengthAdjust="spacingAndGlyphs" stroke="#e6e6e6" stroke-width="0.3">0.32</text>
<line x1="762.5" y1="935.8" x2="762.5" y2="941.3" stroke="#c4c4c4" stroke-width="1.3"/>
<text x="762.5" y="956.5" font-size="15.26" fill="#e6e6e6" text-anchor="middle" textLength="29.7" lengthAdjust="spacingAndGlyphs" stroke="#e6e6e6" stroke-width="0.3">0.33</text>
<rect x="662.8" y="838.5" width="15" height="15" fill="#ffffff" stroke="#111" stroke-width="1.200"/>
<circle cx="780.1" cy="830.9" r="4.900" fill="#000000" stroke="#1a1a1a" stroke-width="1.100"/>
<circle cx="631.1" cy="868.3" r="4.900" fill="#1c1c1c" stroke="#1a1a1a" stroke-width="1.100"/>
<circle cx="669.1" cy="868.6" r="4.900" fill="#333333" stroke="#1a1a1a" stroke-width="1.100"/>
<circle cx="678.1" cy="855.9" r="4.900" fill="#4d4d4d" stroke="#1a1a1a" stroke-width="1.100"/>
<circle cx="679.7" cy="840.4" r="4.900" fill="#686868" stroke="#1a1a1a" stroke-width="1.100"/>
<circle cx="674.9" cy="837.3" r="4.900" fill="#818181" stroke="#1a1a1a" stroke-width="1.100"/>
<circle cx="675.5" cy="849.2" r="4.900" fill="#9a9a9a" stroke="#1a1a1a" stroke-width="1.100"/>
<circle cx="674.9" cy="846.4" r="4.900" fill="#b3b3b3" stroke="#1a1a1a" stroke-width="1.100"/>
<circle cx="676.0" cy="842.9" r="4.900" fill="#cdcdcd" stroke="#1a1a1a" stroke-width="1.100"/>
<circle cx="674.4" cy="842.9" r="4.900" fill="#e6e6e6" stroke="#1a1a1a" stroke-width="1.100"/>
<circle cx="666.4" cy="846.1" r="4.900" fill="#ffffff" stroke="#1a1a1a" stroke-width="1.100"/>
<rect x="815.200" y="728.300" width="1095.800" height="243.300" fill="none" stroke="#242424" stroke-width="3" stroke-dasharray="2.800 1.530" stroke-dashoffset="0.400"/><rect x="815.200" y="728.300" width="1095.800" height="243.300" fill="none" stroke="#dcdcdc" stroke-width="1.900" stroke-dasharray="2 2.330"/>
<text x="941.6" y="746.5" font-size="13.37" fill="#ffffff" text-anchor="start" textLength="6.7" lengthAdjust="spacingAndGlyphs" font-weight="bold" stroke="#ffffff" stroke-width="0.3">0</text>
<text x="1012.5" y="746.5" font-size="13.37" fill="#ffffff" text-anchor="start" textLength="13.4" lengthAdjust="spacingAndGlyphs" font-weight="bold" stroke="#ffffff" stroke-width="0.3">10</text>
<text x="1083.3" y="746.5" font-size="13.37" fill="#ffffff" text-anchor="start" textLength="13.4" lengthAdjust="spacingAndGlyphs" font-weight="bold" stroke="#ffffff" stroke-width="0.3">20</text>
<text x="1154.2" y="746.5" font-size="13.37" fill="#ffffff" text-anchor="start" textLength="13.4" lengthAdjust="spacingAndGlyphs" font-weight="bold" stroke="#ffffff" stroke-width="0.3">30</text>
<text x="1225.0" y="746.5" font-size="13.37" fill="#ffffff" text-anchor="start" textLength="13.4" lengthAdjust="spacingAndGlyphs" font-weight="bold" stroke="#ffffff" stroke-width="0.3">40</text>
<text x="1295.8" y="746.5" font-size="13.37" fill="#ffffff" text-anchor="start" textLength="13.4" lengthAdjust="spacingAndGlyphs" font-weight="bold" stroke="#ffffff" stroke-width="0.3">50</text>
<text x="1366.7" y="746.5" font-size="13.37" fill="#ffffff" text-anchor="start" textLength="13.4" lengthAdjust="spacingAndGlyphs" font-weight="bold" stroke="#ffffff" stroke-width="0.3">60</text>
<text x="1437.5" y="746.5" font-size="13.37" fill="#ffffff" text-anchor="start" textLength="13.4" lengthAdjust="spacingAndGlyphs" font-weight="bold" stroke="#ffffff" stroke-width="0.3">70</text>
<text x="1508.4" y="746.5" font-size="13.37" fill="#ffffff" text-anchor="start" textLength="13.4" lengthAdjust="spacingAndGlyphs" font-weight="bold" stroke="#ffffff" stroke-width="0.3">80</text>
<text x="1579.2" y="746.5" font-size="13.37" fill="#ffffff" text-anchor="start" textLength="13.4" lengthAdjust="spacingAndGlyphs" font-weight="bold" stroke="#ffffff" stroke-width="0.3">90</text>
<text x="1650.1" y="746.5" font-size="13.37" fill="#ffffff" text-anchor="start" textLength="20.1" lengthAdjust="spacingAndGlyphs" font-weight="bold" stroke="#ffffff" stroke-width="0.3">100</text>
<text x="831.0" y="772.5" font-size="14.53" fill="#ffffff" text-anchor="start" textLength="46.4" lengthAdjust="spacingAndGlyphs" stroke="#ffffff" stroke-width="0.3">x: CIE31</text>
<text x="941.6" y="772.5" font-size="14.53" fill="#ffffff" text-anchor="start" textLength="40.0" lengthAdjust="spacingAndGlyphs" stroke="#ffffff" stroke-width="0.3">0.3333</text>
<text x="1012.5" y="772.5" font-size="14.53" fill="#ffffff" text-anchor="start" textLength="40.0" lengthAdjust="spacingAndGlyphs" stroke="#ffffff" stroke-width="0.3">0.3054</text>
<text x="1083.3" y="772.5" font-size="14.53" fill="#ffffff" text-anchor="start" textLength="40.0" lengthAdjust="spacingAndGlyphs" stroke="#ffffff" stroke-width="0.3">0.3125</text>
<text x="1154.2" y="772.5" font-size="14.53" fill="#ffffff" text-anchor="start" textLength="40.0" lengthAdjust="spacingAndGlyphs" stroke="#ffffff" stroke-width="0.3">0.3142</text>
<text x="1225.0" y="772.5" font-size="14.53" fill="#ffffff" text-anchor="start" textLength="40.0" lengthAdjust="spacingAndGlyphs" stroke="#ffffff" stroke-width="0.3">0.3145</text>
<text x="1295.8" y="772.5" font-size="14.53" fill="#ffffff" text-anchor="start" textLength="40.0" lengthAdjust="spacingAndGlyphs" stroke="#ffffff" stroke-width="0.3">0.3136</text>
<text x="1366.7" y="772.5" font-size="14.53" fill="#ffffff" text-anchor="start" textLength="40.0" lengthAdjust="spacingAndGlyphs" stroke="#ffffff" stroke-width="0.3">0.3137</text>
<text x="1437.5" y="772.5" font-size="14.53" fill="#ffffff" text-anchor="start" textLength="40.0" lengthAdjust="spacingAndGlyphs" stroke="#ffffff" stroke-width="0.3">0.3136</text>
<text x="1508.4" y="772.5" font-size="14.53" fill="#ffffff" text-anchor="start" textLength="40.0" lengthAdjust="spacingAndGlyphs" stroke="#ffffff" stroke-width="0.3">0.3138</text>
<text x="1579.2" y="772.5" font-size="14.53" fill="#ffffff" text-anchor="start" textLength="40.0" lengthAdjust="spacingAndGlyphs" stroke="#ffffff" stroke-width="0.3">0.3135</text>
<text x="1650.1" y="772.5" font-size="14.53" fill="#ffffff" text-anchor="start" textLength="40.0" lengthAdjust="spacingAndGlyphs" stroke="#ffffff" stroke-width="0.3">0.3120</text>
<text x="831.0" y="797.1" font-size="14.53" fill="#ececec" text-anchor="start" textLength="46.4" lengthAdjust="spacingAndGlyphs" stroke="#ececec" stroke-width="0.3">y: CIE31</text>
<text x="941.6" y="797.1" font-size="14.53" fill="#ececec" text-anchor="start" textLength="40.0" lengthAdjust="spacingAndGlyphs" stroke="#ececec" stroke-width="0.3">0.3333</text>
<text x="1012.5" y="797.1" font-size="14.53" fill="#ececec" text-anchor="start" textLength="40.0" lengthAdjust="spacingAndGlyphs" stroke="#ececec" stroke-width="0.3">0.3227</text>
<text x="1083.3" y="797.1" font-size="14.53" fill="#ececec" text-anchor="start" textLength="40.0" lengthAdjust="spacingAndGlyphs" stroke="#ececec" stroke-width="0.3">0.3226</text>
<text x="1154.2" y="797.1" font-size="14.53" fill="#ececec" text-anchor="start" textLength="40.0" lengthAdjust="spacingAndGlyphs" stroke="#ececec" stroke-width="0.3">0.3262</text>
<text x="1225.0" y="797.1" font-size="14.53" fill="#ececec" text-anchor="start" textLength="40.0" lengthAdjust="spacingAndGlyphs" stroke="#ececec" stroke-width="0.3">0.3306</text>
<text x="1295.8" y="797.1" font-size="14.53" fill="#ececec" text-anchor="start" textLength="40.0" lengthAdjust="spacingAndGlyphs" stroke="#ececec" stroke-width="0.3">0.3315</text>
<text x="1366.7" y="797.1" font-size="14.53" fill="#ececec" text-anchor="start" textLength="40.0" lengthAdjust="spacingAndGlyphs" stroke="#ececec" stroke-width="0.3">0.3281</text>
<text x="1437.5" y="797.1" font-size="14.53" fill="#ececec" text-anchor="start" textLength="40.0" lengthAdjust="spacingAndGlyphs" stroke="#ececec" stroke-width="0.3">0.3289</text>
<text x="1508.4" y="797.1" font-size="14.53" fill="#ececec" text-anchor="start" textLength="40.0" lengthAdjust="spacingAndGlyphs" stroke="#ececec" stroke-width="0.3">0.3299</text>
<text x="1579.2" y="797.1" font-size="14.53" fill="#ececec" text-anchor="start" textLength="40.0" lengthAdjust="spacingAndGlyphs" stroke="#ececec" stroke-width="0.3">0.3299</text>
<text x="1650.1" y="797.1" font-size="14.53" fill="#ececec" text-anchor="start" textLength="40.0" lengthAdjust="spacingAndGlyphs" stroke="#ececec" stroke-width="0.3">0.3290</text>
<text x="831.0" y="821.8" font-size="14.53" fill="#ffffff" text-anchor="start" textLength="7.4" lengthAdjust="spacingAndGlyphs" stroke="#ffffff" stroke-width="0.3">Y</text>
<text x="941.6" y="821.8" font-size="14.53" fill="#ffffff" text-anchor="start" textLength="40.0" lengthAdjust="spacingAndGlyphs" stroke="#ffffff" stroke-width="0.3">0.0000</text>
<text x="1012.5" y="821.8" font-size="14.53" fill="#ffffff" text-anchor="start" textLength="40.0" lengthAdjust="spacingAndGlyphs" stroke="#ffffff" stroke-width="0.3">3.9789</text>
<text x="1083.3" y="821.8" font-size="14.53" fill="#ffffff" text-anchor="start" textLength="47.3" lengthAdjust="spacingAndGlyphs" stroke="#ffffff" stroke-width="0.3">10.4629</text>
<text x="1154.2" y="821.8" font-size="14.53" fill="#ffffff" text-anchor="start" textLength="47.3" lengthAdjust="spacingAndGlyphs" stroke="#ffffff" stroke-width="0.3">22.1063</text>
<text x="1225.0" y="821.8" font-size="14.53" fill="#ffffff" text-anchor="start" textLength="47.3" lengthAdjust="spacingAndGlyphs" stroke="#ffffff" stroke-width="0.3">44.8230</text>
<text x="1295.8" y="821.8" font-size="14.53" fill="#ffffff" text-anchor="start" textLength="47.3" lengthAdjust="spacingAndGlyphs" stroke="#ffffff" stroke-width="0.3">72.7156</text>
<text x="1366.7" y="821.8" font-size="14.53" fill="#111111" text-anchor="start" textLength="54.6" lengthAdjust="spacingAndGlyphs" stroke="#111111" stroke-width="0.3">106.8107</text>
<text x="1437.5" y="821.8" font-size="14.53" fill="#ffffff" text-anchor="start" textLength="54.6" lengthAdjust="spacingAndGlyphs" stroke="#ffffff" stroke-width="0.3">152.3682</text>
<text x="1508.4" y="821.8" font-size="14.53" fill="#ffffff" text-anchor="start" textLength="54.6" lengthAdjust="spacingAndGlyphs" stroke="#ffffff" stroke-width="0.3">205.1819</text>
<text x="1579.2" y="821.8" font-size="14.53" fill="#ffffff" text-anchor="start" textLength="54.6" lengthAdjust="spacingAndGlyphs" stroke="#ffffff" stroke-width="0.3">263.4582</text>
<text x="1650.1" y="821.8" font-size="14.53" fill="#ffffff" text-anchor="start" textLength="54.6" lengthAdjust="spacingAndGlyphs" stroke="#ffffff" stroke-width="0.3">333.0416</text>
<text x="831.0" y="846.4" font-size="14.53" fill="#ececec" text-anchor="start" textLength="48.4" lengthAdjust="spacingAndGlyphs" stroke="#ececec" stroke-width="0.3">Target Y</text>
<text x="941.6" y="846.4" font-size="14.53" fill="#ececec" text-anchor="start" textLength="40.0" lengthAdjust="spacingAndGlyphs" stroke="#ececec" stroke-width="0.3">0.0000</text>
<text x="1012.5" y="846.4" font-size="14.53" fill="#ececec" text-anchor="start" textLength="40.0" lengthAdjust="spacingAndGlyphs" stroke="#ececec" stroke-width="0.3">3.4403</text>
<text x="1083.3" y="846.4" font-size="14.53" fill="#ececec" text-anchor="start" textLength="46.3" lengthAdjust="spacingAndGlyphs" stroke="#ececec" stroke-width="0.3">11.0253</text>
<text x="1154.2" y="846.4" font-size="14.53" fill="#ececec" text-anchor="start" textLength="47.3" lengthAdjust="spacingAndGlyphs" stroke="#ececec" stroke-width="0.3">24.0695</text>
<text x="1225.0" y="846.4" font-size="14.53" fill="#ececec" text-anchor="start" textLength="47.3" lengthAdjust="spacingAndGlyphs" stroke="#ececec" stroke-width="0.3">44.2507</text>
<text x="1295.8" y="846.4" font-size="14.53" fill="#ececec" text-anchor="start" textLength="47.3" lengthAdjust="spacingAndGlyphs" stroke="#ececec" stroke-width="0.3">71.8905</text>
<text x="1366.7" y="846.4" font-size="14.53" fill="#ececec" text-anchor="start" textLength="54.6" lengthAdjust="spacingAndGlyphs" stroke="#ececec" stroke-width="0.3">106.0893</text>
<text x="1437.5" y="846.4" font-size="14.53" fill="#ececec" text-anchor="start" textLength="54.6" lengthAdjust="spacingAndGlyphs" stroke="#ececec" stroke-width="0.3">148.2705</text>
<text x="1508.4" y="846.4" font-size="14.53" fill="#ececec" text-anchor="start" textLength="54.6" lengthAdjust="spacingAndGlyphs" stroke="#ececec" stroke-width="0.3">201.0996</text>
<text x="1579.2" y="846.4" font-size="14.53" fill="#ececec" text-anchor="start" textLength="54.6" lengthAdjust="spacingAndGlyphs" stroke="#ececec" stroke-width="0.3">263.5351</text>
<text x="1650.1" y="846.4" font-size="14.53" fill="#ececec" text-anchor="start" textLength="54.6" lengthAdjust="spacingAndGlyphs" stroke="#ececec" stroke-width="0.3">333.0416</text>
<text x="831.0" y="871.0" font-size="14.53" fill="#ffffff" text-anchor="start" textLength="101.6" lengthAdjust="spacingAndGlyphs" stroke="#ffffff" stroke-width="0.3">Gamma Log/Log</text>
<text x="941.6" y="871.0" font-size="14.53" fill="#ffffff" text-anchor="start" textLength="40.0" lengthAdjust="spacingAndGlyphs" stroke="#ffffff" stroke-width="0.3">1.2778</text>
<text x="1012.5" y="871.0" font-size="14.53" fill="#ffffff" text-anchor="start" textLength="40.0" lengthAdjust="spacingAndGlyphs" stroke="#ffffff" stroke-width="0.3">1.9391</text>
<text x="1083.3" y="871.0" font-size="14.53" fill="#ffffff" text-anchor="start" textLength="40.0" lengthAdjust="spacingAndGlyphs" stroke="#ffffff" stroke-width="0.3">2.1501</text>
<text x="1154.2" y="871.0" font-size="14.53" fill="#ffffff" text-anchor="start" textLength="40.0" lengthAdjust="spacingAndGlyphs" stroke="#ffffff" stroke-width="0.3">2.2407</text>
<text x="1225.0" y="871.0" font-size="14.53" fill="#ffffff" text-anchor="start" textLength="40.0" lengthAdjust="spacingAndGlyphs" stroke="#ffffff" stroke-width="0.3">2.1888</text>
<text x="1295.8" y="871.0" font-size="14.53" fill="#ffffff" text-anchor="start" textLength="40.0" lengthAdjust="spacingAndGlyphs" stroke="#ffffff" stroke-width="0.3">2.2078</text>
<text x="1366.7" y="871.0" font-size="14.53" fill="#ffffff" text-anchor="start" textLength="40.0" lengthAdjust="spacingAndGlyphs" stroke="#ffffff" stroke-width="0.3">2.2262</text>
<text x="1437.5" y="871.0" font-size="14.53" fill="#ffffff" text-anchor="start" textLength="40.0" lengthAdjust="spacingAndGlyphs" stroke="#ffffff" stroke-width="0.3">2.1753</text>
<text x="1508.4" y="871.0" font-size="14.53" fill="#ffffff" text-anchor="start" textLength="40.0" lengthAdjust="spacingAndGlyphs" stroke="#ffffff" stroke-width="0.3">2.1707</text>
<text x="1579.2" y="871.0" font-size="14.53" fill="#ffffff" text-anchor="start" textLength="40.0" lengthAdjust="spacingAndGlyphs" stroke="#ffffff" stroke-width="0.3">2.2714</text>
<text x="1650.1" y="871.0" font-size="14.53" fill="#ffffff" text-anchor="start" textLength="40.0" lengthAdjust="spacingAndGlyphs" stroke="#ffffff" stroke-width="0.3">2.2749</text>
<text x="831.0" y="895.7" font-size="14.53" fill="#ececec" text-anchor="start" textLength="23.3" lengthAdjust="spacingAndGlyphs" stroke="#ececec" stroke-width="0.3">CCT</text>
<text x="941.6" y="895.7" font-size="14.53" fill="#ececec" text-anchor="start" textLength="61.8" lengthAdjust="spacingAndGlyphs" stroke="#ececec" stroke-width="0.3">5456.0000</text>
<text x="1012.5" y="895.7" font-size="14.53" fill="#ececec" text-anchor="start" textLength="61.8" lengthAdjust="spacingAndGlyphs" stroke="#ececec" stroke-width="0.3">6982.0000</text>
<text x="1083.3" y="895.7" font-size="14.53" fill="#ececec" text-anchor="start" textLength="61.8" lengthAdjust="spacingAndGlyphs" stroke="#ececec" stroke-width="0.3">6568.0000</text>
<text x="1154.2" y="895.7" font-size="14.53" fill="#ececec" text-anchor="start" textLength="61.8" lengthAdjust="spacingAndGlyphs" stroke="#ececec" stroke-width="0.3">6440.0000</text>
<text x="1225.0" y="895.7" font-size="14.53" fill="#ececec" text-anchor="start" textLength="61.8" lengthAdjust="spacingAndGlyphs" stroke="#ececec" stroke-width="0.3">6395.0000</text>
<text x="1295.8" y="895.7" font-size="14.53" fill="#ececec" text-anchor="start" textLength="61.8" lengthAdjust="spacingAndGlyphs" stroke="#ececec" stroke-width="0.3">6435.0000</text>
<text x="1366.7" y="895.7" font-size="14.53" fill="#ececec" text-anchor="start" textLength="61.8" lengthAdjust="spacingAndGlyphs" stroke="#ececec" stroke-width="0.3">6456.0000</text>
<text x="1437.5" y="895.7" font-size="14.53" fill="#ececec" text-anchor="start" textLength="61.8" lengthAdjust="spacingAndGlyphs" stroke="#ececec" stroke-width="0.3">6457.0000</text>
<text x="1508.4" y="895.7" font-size="14.53" fill="#ececec" text-anchor="start" textLength="61.8" lengthAdjust="spacingAndGlyphs" stroke="#ececec" stroke-width="0.3">6440.0000</text>
<text x="1579.2" y="895.7" font-size="14.53" fill="#ececec" text-anchor="start" textLength="61.8" lengthAdjust="spacingAndGlyphs" stroke="#ececec" stroke-width="0.3">6454.0000</text>
<text x="1650.1" y="895.7" font-size="14.53" fill="#ececec" text-anchor="start" textLength="61.8" lengthAdjust="spacingAndGlyphs" stroke="#ececec" stroke-width="0.3">6540.0000</text>
<text x="831.0" y="920.3" font-size="14.53" fill="#ffffff" text-anchor="start" textLength="49.3" lengthAdjust="spacingAndGlyphs" stroke="#ffffff" stroke-width="0.3">ΔE 2000</text>
<text x="941.6" y="920.3" font-size="14.53" fill="#ffffff" text-anchor="start" textLength="40.0" lengthAdjust="spacingAndGlyphs" stroke="#ffffff" stroke-width="0.3">0.0000</text>
<text x="1012.5" y="920.3" font-size="14.53" fill="#ffffff" text-anchor="start" textLength="40.0" lengthAdjust="spacingAndGlyphs" stroke="#ffffff" stroke-width="0.3">1.1847</text>
<text x="1083.3" y="920.3" font-size="14.53" fill="#ffffff" text-anchor="start" textLength="40.0" lengthAdjust="spacingAndGlyphs" stroke="#ffffff" stroke-width="0.3">1.7077</text>
<text x="1154.2" y="920.3" font-size="14.53" fill="#ffffff" text-anchor="start" textLength="40.0" lengthAdjust="spacingAndGlyphs" stroke="#ffffff" stroke-width="0.3">1.7317</text>
<text x="1225.0" y="920.3" font-size="14.53" fill="#ffffff" text-anchor="start" textLength="40.0" lengthAdjust="spacingAndGlyphs" stroke="#ffffff" stroke-width="0.3">0.5481</text>
<text x="1295.8" y="920.3" font-size="14.53" fill="#ffffff" text-anchor="start" textLength="40.0" lengthAdjust="spacingAndGlyphs" stroke="#ffffff" stroke-width="0.3">1.0070</text>
<text x="1366.7" y="920.3" font-size="14.53" fill="#ffffff" text-anchor="start" textLength="40.0" lengthAdjust="spacingAndGlyphs" stroke="#ffffff" stroke-width="0.3">1.0085</text>
<text x="1437.5" y="920.3" font-size="14.53" fill="#ffffff" text-anchor="start" textLength="40.0" lengthAdjust="spacingAndGlyphs" stroke="#ffffff" stroke-width="0.3">0.8558</text>
<text x="1508.4" y="920.3" font-size="14.53" fill="#ffffff" text-anchor="start" textLength="40.0" lengthAdjust="spacingAndGlyphs" stroke="#ffffff" stroke-width="0.3">0.6567</text>
<text x="1579.2" y="920.3" font-size="14.53" fill="#ffffff" text-anchor="start" textLength="40.0" lengthAdjust="spacingAndGlyphs" stroke="#ffffff" stroke-width="0.3">0.4400</text>
<text x="1650.1" y="920.3" font-size="14.53" fill="#ffffff" text-anchor="start" textLength="40.0" lengthAdjust="spacingAndGlyphs" stroke="#ffffff" stroke-width="0.3">0.5439</text>
<text x="831.0" y="945.0" font-size="14.53" fill="#ececec" text-anchor="start" textLength="33.5" lengthAdjust="spacingAndGlyphs" stroke="#ececec" stroke-width="0.3">dEITP</text>
<text x="941.6" y="945.0" font-size="14.53" fill="#ececec" text-anchor="start" textLength="40.0" lengthAdjust="spacingAndGlyphs" stroke="#ececec" stroke-width="0.3">0.0053</text>
<text x="1012.5" y="945.0" font-size="14.53" fill="#ececec" text-anchor="start" textLength="40.0" lengthAdjust="spacingAndGlyphs" stroke="#ececec" stroke-width="0.3">7.5945</text>
<text x="1083.3" y="945.0" font-size="14.53" fill="#ececec" text-anchor="start" textLength="40.0" lengthAdjust="spacingAndGlyphs" stroke="#ececec" stroke-width="0.3">3.6490</text>
<text x="1154.2" y="945.0" font-size="14.53" fill="#ececec" text-anchor="start" textLength="40.0" lengthAdjust="spacingAndGlyphs" stroke="#ececec" stroke-width="0.3">5.5766</text>
<text x="1225.0" y="945.0" font-size="14.53" fill="#ececec" text-anchor="start" textLength="40.0" lengthAdjust="spacingAndGlyphs" stroke="#ececec" stroke-width="0.3">1.2763</text>
<text x="1295.8" y="945.0" font-size="14.53" fill="#ececec" text-anchor="start" textLength="40.0" lengthAdjust="spacingAndGlyphs" stroke="#ececec" stroke-width="0.3">1.2158</text>
<text x="1366.7" y="945.0" font-size="14.53" fill="#ececec" text-anchor="start" textLength="40.0" lengthAdjust="spacingAndGlyphs" stroke="#ececec" stroke-width="0.3">1.0723</text>
<text x="1437.5" y="945.0" font-size="14.53" fill="#ececec" text-anchor="start" textLength="40.0" lengthAdjust="spacingAndGlyphs" stroke="#ececec" stroke-width="0.3">2.1275</text>
<text x="1508.4" y="945.0" font-size="14.53" fill="#ececec" text-anchor="start" textLength="40.0" lengthAdjust="spacingAndGlyphs" stroke="#ececec" stroke-width="0.3">1.6244</text>
<text x="1579.2" y="945.0" font-size="14.53" fill="#ececec" text-anchor="start" textLength="40.0" lengthAdjust="spacingAndGlyphs" stroke="#ececec" stroke-width="0.3">0.4823</text>
<text x="1650.1" y="945.0" font-size="14.53" fill="#ececec" text-anchor="start" textLength="40.0" lengthAdjust="spacingAndGlyphs" stroke="#ececec" stroke-width="0.3">0.4661</text>
<text x="207.2" y="1053.0" font-size="7.56" fill="#1c1c1c" text-anchor="middle" textLength="4.0" lengthAdjust="spacingAndGlyphs" stroke="#1c1c1c" stroke-width="0.3">0</text>
<text x="321.2" y="1053.0" font-size="7.56" fill="#1c1c1c" text-anchor="middle" textLength="8.0" lengthAdjust="spacingAndGlyphs" stroke="#1c1c1c" stroke-width="0.3">10</text>
<text x="435.3" y="1053.0" font-size="7.56" fill="#1c1c1c" text-anchor="middle" textLength="8.0" lengthAdjust="spacingAndGlyphs" stroke="#1c1c1c" stroke-width="0.3">20</text>
<text x="549.4" y="1053.0" font-size="7.56" fill="#1c1c1c" text-anchor="middle" textLength="8.0" lengthAdjust="spacingAndGlyphs" stroke="#1c1c1c" stroke-width="0.3">30</text>
<text x="663.4" y="1053.0" font-size="7.56" fill="#1c1c1c" text-anchor="middle" textLength="8.0" lengthAdjust="spacingAndGlyphs" stroke="#1c1c1c" stroke-width="0.3">40</text>
<text x="777.4" y="1053.0" font-size="7.56" fill="#1c1c1c" text-anchor="middle" textLength="8.0" lengthAdjust="spacingAndGlyphs" stroke="#1c1c1c" stroke-width="0.3">50</text>
<text x="891.5" y="1053.0" font-size="7.56" fill="#1c1c1c" text-anchor="middle" textLength="8.0" lengthAdjust="spacingAndGlyphs" stroke="#1c1c1c" stroke-width="0.3">60</text>
<text x="1005.6" y="1053.0" font-size="7.56" fill="#1c1c1c" text-anchor="middle" textLength="8.0" lengthAdjust="spacingAndGlyphs" stroke="#1c1c1c" stroke-width="0.3">70</text>
<text x="1119.6" y="1053.0" font-size="7.56" fill="#1c1c1c" text-anchor="middle" textLength="8.0" lengthAdjust="spacingAndGlyphs" stroke="#1c1c1c" stroke-width="0.3">80</text>
<text x="1233.7" y="1053.0" font-size="7.56" fill="#1c1c1c" text-anchor="middle" textLength="8.0" lengthAdjust="spacingAndGlyphs" stroke="#1c1c1c" stroke-width="0.3">90</text>
<text x="1347.7" y="1053.0" font-size="7.56" fill="#ffffff" text-anchor="middle" textLength="12.0" lengthAdjust="spacingAndGlyphs" font-weight="bold" stroke="#ffffff" stroke-width="0.3">100</text>
<path d="M1737.600 1042.600l-3 3.500l3 3.500M1740.800 1042.600l-3 3.500l3 3.500" fill="none" stroke="#222" stroke-width="1.500"/>
<path d="M1893.800 1042.600l3 3.500l-3 3.500M1897 1042.600l3 3.500l-3 3.500" fill="none" stroke="#222" stroke-width="1.500"/>
<text x="1757.5" y="1051.7" font-size="17.01" fill="#242424" text-anchor="start" textLength="37.5" lengthAdjust="spacingAndGlyphs" stroke="#242424" stroke-width="0.3">Back</text>
<text x="1837.5" y="1051.7" font-size="17.01" fill="#242424" text-anchor="start" textLength="38.3" lengthAdjust="spacingAndGlyphs" stroke="#242424" stroke-width="0.3">Next</text>
<g stroke-linejoin="round" fill="none"><path d="M1631 997L1670 1005L1670.500 1026L1641 1029.500L1697 1032.500L1656.500 1046.500L1633.500 1034Z" stroke="#ffffff" stroke-opacity="0.280" stroke-width="5.200"/><path d="M1631 997L1670 1005L1670.500 1026L1641 1029.500L1697 1032.500L1656.500 1046.500L1633.500 1034Z" stroke="#862630" stroke-opacity="0.850" stroke-width="3.200"/><path d="M1637 1004.500L1665.500 1010.500L1665.800 1022L1638.500 1025.300Z" fill="#2c2c2c" fill-opacity="0.450" stroke="none"/><path d="M1642.300 1009.500L1654.200 1023L1674 996" stroke="#ffffff" stroke-opacity="0.650" stroke-width="5.400" stroke-linecap="round"/><path d="M1642.300 1009.500L1654.200 1023L1674 996" stroke="#3a3033" stroke-opacity="0.900" stroke-width="3.400" stroke-linecap="round"/></g>
<text x="1676.700" y="1025" font-size="26.200" font-weight="bold" fill="none" stroke="#ffffff" stroke-opacity="0.420" stroke-width="3.200" textLength="146.500" lengthAdjust="spacingAndGlyphs">NOTEBOOK</text>
<text x="1676.700" y="1025" font-size="26.200" font-weight="bold" fill="#8a2630" fill-opacity="0.800" stroke="#8a2630" stroke-opacity="0.800" stroke-width="1.400" textLength="146.500" lengthAdjust="spacingAndGlyphs">NOTEBOOK</text>
<text x="1824.300" y="1025" font-size="26.200" fill="none" stroke="#ffffff" stroke-opacity="0.600" stroke-width="3.400" textLength="87.500" lengthAdjust="spacingAndGlyphs">CHECK</text>
<text x="1824.300" y="1025" font-size="26.200" fill="#202020" fill-opacity="0.860" stroke="#202020" stroke-opacity="0.860" stroke-width="1" textLength="87.500" lengthAdjust="spacingAndGlyphs">CHECK</text>
</svg>
</body></html>
